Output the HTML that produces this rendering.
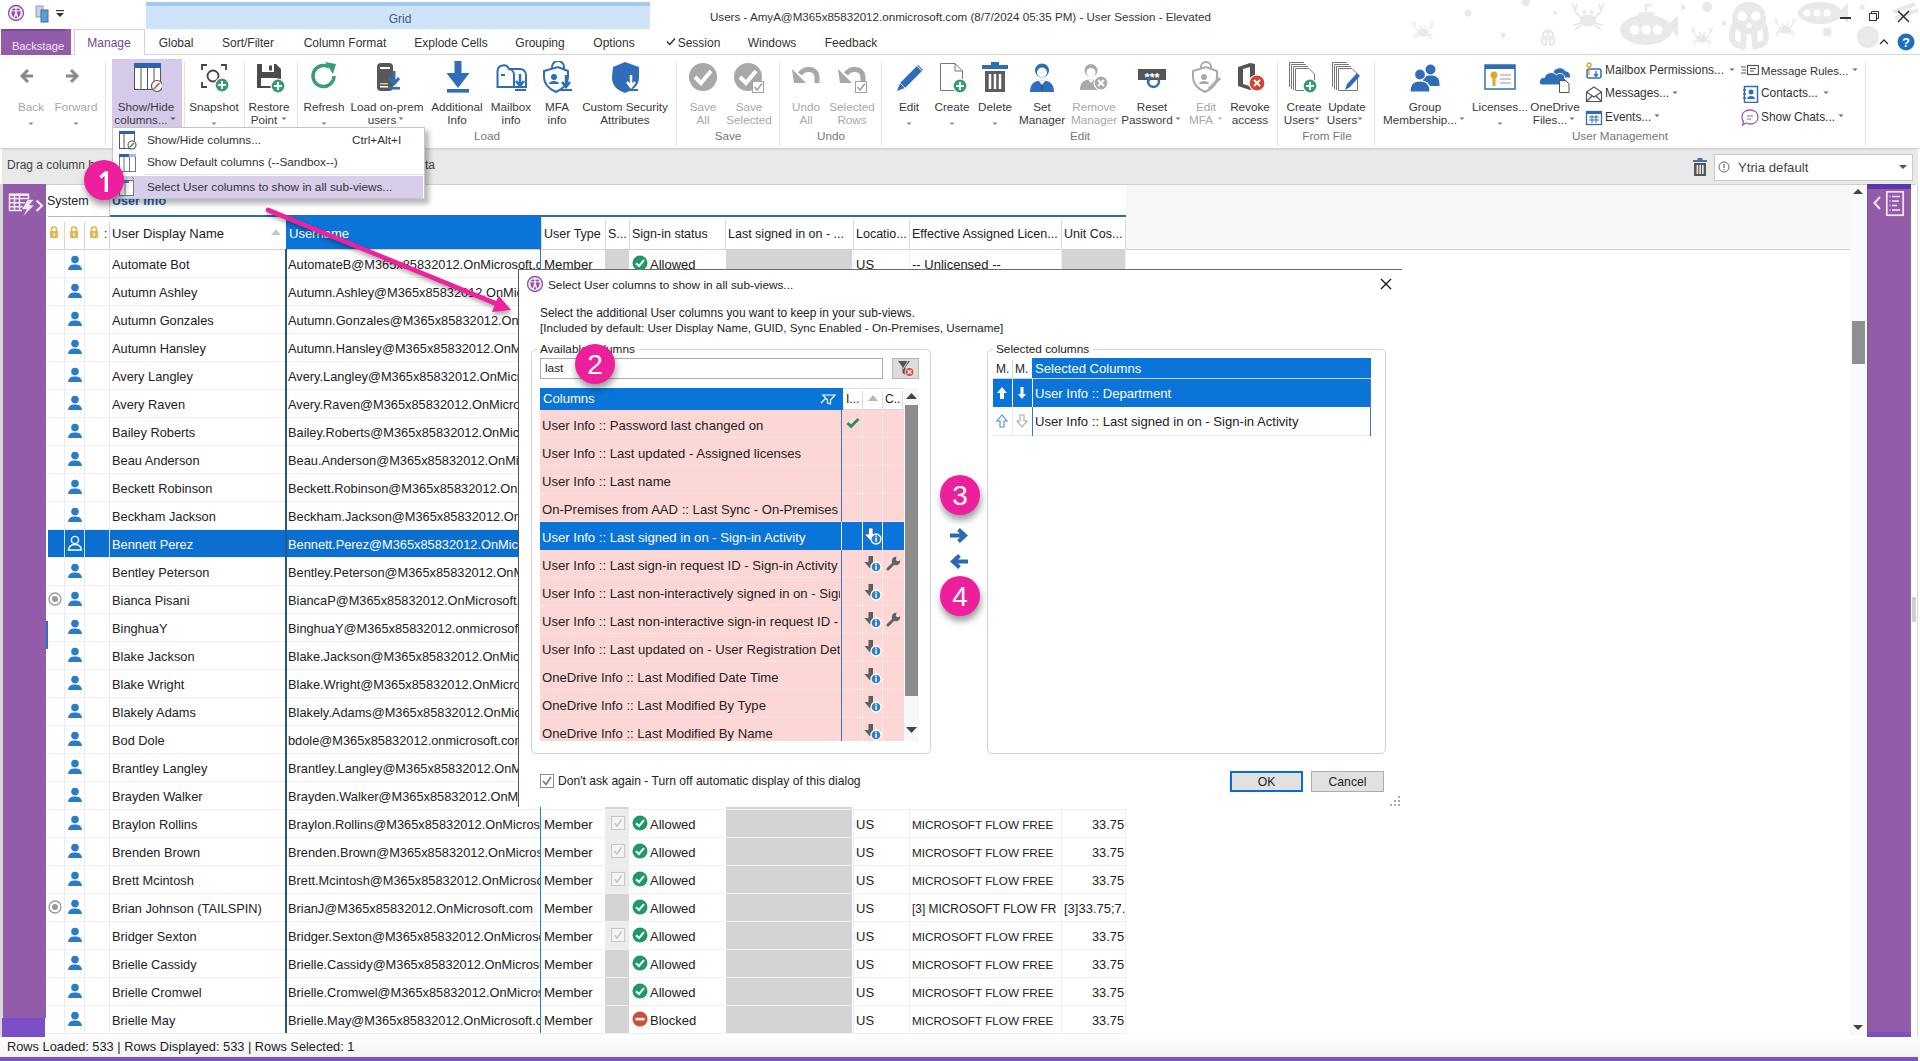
<!DOCTYPE html><html><head><meta charset="utf-8"><style>
html,body{margin:0;padding:0;width:1920px;height:1061px;overflow:hidden;background:#fff;font-family:"Liberation Sans", sans-serif;}
.t{position:absolute;white-space:pre;}
.r{position:absolute;}
.clip{position:absolute;overflow:hidden;}
</style></head><body>

<svg class="r" style="left:7px;top:4px;" width="18" height="18" viewBox="0 0 18 18"><circle cx="9" cy="9" r="7.5" fill="#f5e2f8" stroke="#85589a" stroke-width="1.3"/><ellipse cx="6.8" cy="5.6" rx="1.7" ry="1" fill="#85589a"/><ellipse cx="11.2" cy="5.6" rx="1.7" ry="1" fill="#85589a"/><path d="M4.3 7.6 Q7 7 8.3 7.8 L6.6 13.6 Q4.3 11.2 4.3 7.6Z M13.7 7.6 Q11 7 9.7 7.8 L11.4 13.6 Q13.7 11.2 13.7 7.6Z" fill="#85589a"/><path d="M9 11.3 L10.4 14.2 L7.6 14.2Z" fill="#85589a"/></svg>
<svg class="r" style="left:35px;top:5px;" width="16" height="18" viewBox="0 0 16 18"><rect x="1" y="1" width="7" height="11" fill="#c4d3e6" stroke="#8aa0bb"/><rect x="6" y="5" width="7" height="12" fill="#5b9bd5" stroke="#3d6fa6"/></svg>
<svg class="r" style="left:55px;top:9px;" width="10" height="8" viewBox="0 0 10 8"><rect x="1" y="1" width="8" height="1.2" fill="#333"/><path d="M1 4 L9 4 L5 8Z" fill="#333"/></svg>
<div class="r" style="left:146px;top:2px;width:504px;height:27px;background:#cfe4f8;"></div>
<div class="r" style="left:146px;top:2px;width:504px;height:4px;background:#a3c9ee;"></div>
<div class="t " style="left:400px;top:11.5px;font-size:12px;line-height:15px;color:#3d5a80;width:100px;text-align:center;left:350.0px;">Grid</div>
<div class="t " style="left:710px;top:10.0px;font-size:11.6px;line-height:14px;color:#333;">Users - AmyA@M365x85832012.onmicrosoft.com (8/7/2024 05:35 PM) - User Session - Elevated</div>
<svg class="r" style="left:0;top:0" width="1920" height="55" viewBox="0 0 1920 55"><g transform="translate(1423,31) scale(0.8)" fill="#e9e9e9" stroke="#e9e9e9"><ellipse cx="0" cy="2" rx="7" ry="5" stroke="none"/><path d="M-6 0 L-11 -6 L-13 -12 M-11 -6 L-9 -12 M6 0 L11 -6 L13 -12 M11 -6 L9 -12 M-6 4 L-12 6 M-6 6 L-11 10 M6 4 L12 6 M6 6 L11 10" fill="none" stroke-width="1.6"/><circle cx="-3" cy="-5" r="1.6" stroke="none"/><circle cx="3" cy="-5" r="1.6" stroke="none"/></g><g transform="translate(1588,18) scale(1.2)" fill="#e9e9e9" stroke="#e9e9e9"><ellipse cx="0" cy="2" rx="7" ry="5" stroke="none"/><path d="M-6 0 L-11 -6 L-13 -12 M-11 -6 L-9 -12 M6 0 L11 -6 L13 -12 M11 -6 L9 -12 M-6 4 L-12 6 M-6 6 L-11 10 M6 4 L12 6 M6 6 L11 10" fill="none" stroke-width="1.6"/><circle cx="-3" cy="-5" r="1.6" stroke="none"/><circle cx="3" cy="-5" r="1.6" stroke="none"/></g><g transform="translate(1702,37) scale(0.8)" fill="#e9e9e9" stroke="#e9e9e9"><ellipse cx="0" cy="2" rx="7" ry="5" stroke="none"/><path d="M-6 0 L-11 -6 L-13 -12 M-11 -6 L-9 -12 M6 0 L11 -6 L13 -12 M11 -6 L9 -12 M-6 4 L-12 6 M-6 6 L-11 10 M6 4 L12 6 M6 6 L11 10" fill="none" stroke-width="1.6"/><circle cx="-3" cy="-5" r="1.6" stroke="none"/><circle cx="3" cy="-5" r="1.6" stroke="none"/></g><g transform="translate(1785,28) scale(0.8)" fill="#e9e9e9" stroke="#e9e9e9"><ellipse cx="0" cy="2" rx="7" ry="5" stroke="none"/><path d="M-6 0 L-11 -6 L-13 -12 M-11 -6 L-9 -12 M6 0 L11 -6 L13 -12 M11 -6 L9 -12 M-6 4 L-12 6 M-6 6 L-11 10 M6 4 L12 6 M6 6 L11 10" fill="none" stroke-width="1.6"/><circle cx="-3" cy="-5" r="1.6" stroke="none"/><circle cx="3" cy="-5" r="1.6" stroke="none"/></g><g fill="#e9e9e9"><ellipse cx="1548" cy="35" rx="6" ry="5.699999999999999"/><path d="M1542.6 38.0 Q1540.8 44.0 1544.4 44.6 M1546.2 39.8 L1545.9 45.2 M1549.8 39.8 L1550.1 45.2 M1553.4 38.0 Q1555.2 44.0 1551.6 44.6" fill="none" stroke="#e9e9e9" stroke-width="2.0999999999999996" stroke-linecap="round"/><circle cx="1545.6" cy="34.4" r="1.6800000000000002" fill="#fff"/><circle cx="1550.4" cy="34.4" r="1.6800000000000002" fill="#fff"/><circle cx="1548" cy="37.7" r="0.8999999999999999" fill="#fff"/></g><g fill="#e9e9e9"><ellipse cx="1749" cy="18" rx="17" ry="16.15"/><path d="M1733.7 26.5 Q1728.6 43.5 1738.8 45.2 M1743.9 31.6 L1743.05 46.9 M1754.1 31.6 L1754.95 46.9 M1764.3 26.5 Q1769.4 43.5 1759.2 45.2" fill="none" stroke="#e9e9e9" stroke-width="5.949999999999999" stroke-linecap="round"/><circle cx="1742.2" cy="16.3" r="4.760000000000001" fill="#fff"/><circle cx="1755.8" cy="16.3" r="4.760000000000001" fill="#fff"/><circle cx="1749" cy="25.65" r="2.55" fill="#fff"/></g><g fill="#e9e9e9"><ellipse cx="1646.0" cy="29.8" rx="26.0" ry="15.2"/><rect x="1638.2" y="12.2" width="15.6" height="8.0"/><path d="M1646.0 12.2 V5 H1652.24" fill="none" stroke="#e9e9e9" stroke-width="2.5"/><circle cx="1634.56" cy="29.8" r="4.8" fill="#fff"/><circle cx="1646.0" cy="29.8" r="4.8" fill="#fff"/><circle cx="1657.44" cy="29.8" r="4.8" fill="#fff"/></g><path d="M1668 25 L1678 15 L1678 38Z" fill="#e9e9e9"/><ellipse cx="1820" cy="13" rx="22" ry="11" fill="#e9e9e9"/><path d="M1838 13 L1848 3 L1848 23Z" fill="#e9e9e9"/><circle cx="1807" cy="13" r="3.5" fill="#fff"/><circle cx="1817" cy="13" r="3.5" fill="#fff"/><circle cx="1827" cy="13" r="3.5" fill="#fff"/><circle cx="1468" cy="13" r="3.5" fill="#e9e9e9"/><circle cx="1526" cy="2" r="4" fill="#e9e9e9"/><circle cx="1503" cy="35" r="2.5" fill="#e9e9e9"/><circle cx="1555" cy="13" r="2" fill="#e9e9e9"/><circle cx="1707" cy="7" r="5" fill="#e9e9e9"/><circle cx="1683" cy="7" r="2.5" fill="#e9e9e9"/><circle cx="1724" cy="23" r="2.5" fill="#e9e9e9"/><circle cx="1827" cy="32" r="4.5" fill="#e9e9e9"/><circle cx="1868" cy="37" r="11" fill="#e9e9e9"/><circle cx="1862" cy="7" r="2.5" fill="#e9e9e9"/><path d="M1893 12 L1915 4 M1895 18 L1918 10" stroke="#e9e9e9" stroke-width="4"/></svg>
<div class="r" style="left:1840px;top:17px;width:11px;height:1.5px;background:#333;"></div>
<svg class="r" style="left:1868px;top:10px;" width="12" height="12" viewBox="0 0 12 12"><rect x="1.5" y="3.5" width="7" height="7" fill="none" stroke="#333"/><path d="M3.5 3.5 V1.5 H10.5 V8.5 H8.5" fill="none" stroke="#333"/></svg>
<svg class="r" style="left:1897px;top:10px;" width="13" height="13" viewBox="0 0 13 13"><path d="M1 1 L12 12 M12 1 L1 12" stroke="#222" stroke-width="1.4"/></svg>
<svg class="r" style="left:1879px;top:38px;" width="10" height="7" viewBox="0 0 10 7"><path d="M1 6 L5 2 L9 6" fill="none" stroke="#333" stroke-width="1.3"/></svg>
<svg class="r" style="left:1897px;top:33px;" width="18" height="18" viewBox="0 0 18 18"><circle cx="9" cy="9" r="8.5" fill="#1f6fc0"/><text x="9" y="14" font-family="Liberation Sans" font-weight="bold" font-size="13" fill="#fff" text-anchor="middle">?</text></svg>
<div class="r" style="left:0px;top:54px;width:1920px;height:1px;background:#d5d5d5;"></div>
<div class="r" style="left:1px;top:29px;width:70px;height:26px;background:#935ca9;"></div>
<div class="r" style="left:1px;top:29px;width:64px;height:2px;background:#7d45a0;"></div>
<div class="t " style="left:38px;top:39.0px;font-size:11.2px;line-height:14px;color:#f6e2fb;width:70px;text-align:center;left:3.0px;">Backstage</div>
<div class="r" style="left:74px;top:29px;width:71px;height:26px;background:#fff;border:1px solid #d0d0d0;border-bottom:none;box-sizing:border-box;"></div>
<div class="t " style="left:109px;top:35.5px;font-size:12px;line-height:15px;color:#6a4a94;width:69px;text-align:center;left:74.5px;">Manage</div>
<div class="t " style="left:176px;top:35.5px;font-size:12px;line-height:15px;color:#333;width:140px;text-align:center;left:106.0px;">Global</div>
<div class="t " style="left:248px;top:35.5px;font-size:12px;line-height:15px;color:#333;width:140px;text-align:center;left:178.0px;">Sort/Filter</div>
<div class="t " style="left:345px;top:35.5px;font-size:12px;line-height:15px;color:#333;width:140px;text-align:center;left:275.0px;">Column Format</div>
<div class="t " style="left:451px;top:35.5px;font-size:12px;line-height:15px;color:#333;width:140px;text-align:center;left:381.0px;">Explode Cells</div>
<div class="t " style="left:540px;top:35.5px;font-size:12px;line-height:15px;color:#333;width:140px;text-align:center;left:470.0px;">Grouping</div>
<div class="t " style="left:614px;top:35.5px;font-size:12px;line-height:15px;color:#333;width:140px;text-align:center;left:544.0px;">Options</div>
<div class="t " style="left:699px;top:35.5px;font-size:12px;line-height:15px;color:#333;width:140px;text-align:center;left:629.0px;">Session</div>
<div class="t " style="left:772px;top:35.5px;font-size:12px;line-height:15px;color:#333;width:140px;text-align:center;left:702.0px;">Windows</div>
<div class="t " style="left:851px;top:35.5px;font-size:12px;line-height:15px;color:#333;width:140px;text-align:center;left:781.0px;">Feedback</div>
<svg class="r" style="left:666px;top:37px;" width="10" height="9" viewBox="0 0 10 9"><path d="M1 4.5 L3.8 7.5 L9 1.5" fill="none" stroke="#333" stroke-width="1.5"/></svg>
<div class="r" style="left:0px;top:148px;width:1920px;height:1px;background:#d6d6d6;"></div>
<div class="r" style="left:112px;top:59px;width:70px;height:68px;background:#d6caeb;"></div>
<div class="r" style="left:105px;top:62px;width:1px;height:84px;background:#e3e3e3;"></div>
<div class="r" style="left:184px;top:62px;width:1px;height:84px;background:#e3e3e3;"></div>
<div class="r" style="left:244px;top:62px;width:1px;height:84px;background:#e3e3e3;"></div>
<div class="r" style="left:297px;top:62px;width:1px;height:84px;background:#e3e3e3;"></div>
<div class="r" style="left:676px;top:62px;width:1px;height:84px;background:#e3e3e3;"></div>
<div class="r" style="left:779px;top:62px;width:1px;height:84px;background:#e3e3e3;"></div>
<div class="r" style="left:881px;top:62px;width:1px;height:84px;background:#e3e3e3;"></div>
<div class="r" style="left:1277px;top:62px;width:1px;height:84px;background:#e3e3e3;"></div>
<div class="r" style="left:1374px;top:62px;width:1px;height:84px;background:#e3e3e3;"></div>
<div class="r" style="left:1865px;top:62px;width:1px;height:84px;background:#e3e3e3;"></div>
<svg class="r" style="left:15px;top:61px;" width="32" height="32" viewBox="0 0 32 32"><path d="M18 15 H8 M13 9 L7 15 L13 21" fill="none" stroke="#8a8a8a" stroke-width="3"/></svg>
<div class="t " style="left:31px;top:99.0px;font-size:11.7px;line-height:15px;color:#a8a8a8;width:160px;text-align:center;left:-49.0px;">Back</div>
<svg class="r" style="left:28px;top:122px;" width="6" height="4" viewBox="0 0 6 4"><path d="M0.5 0.5 L5.5 0.5 L3 3Z" fill="#888"/></svg>
<svg class="r" style="left:60px;top:61px;" width="32" height="32" viewBox="0 0 32 32"><path d="M6 15 H16 M11 9 L17 15 L11 21" fill="none" stroke="#8a8a8a" stroke-width="3"/></svg>
<div class="t " style="left:76px;top:99.0px;font-size:11.7px;line-height:15px;color:#a8a8a8;width:160px;text-align:center;left:-4.0px;">Forward</div>
<svg class="r" style="left:73px;top:122px;" width="6" height="4" viewBox="0 0 6 4"><path d="M0.5 0.5 L5.5 0.5 L3 3Z" fill="#888"/></svg>
<svg class="r" style="left:130px;top:61px;" width="32" height="32" viewBox="0 0 32 32"><rect x="4.5" y="2.5" width="26" height="26" fill="#fff" stroke="#555"/><rect x="4" y="2" width="27" height="5" fill="#2d63a8"/><path d="M11 7 V28 M17.5 7 V28 M24 7 V28" stroke="#555"/><circle cx="27" cy="25" r="5.5" fill="#fff" stroke="#555" stroke-width="1.2"/><path d="M24 28 L29.5 22" stroke="#d9452f" stroke-width="1.5"/></svg>
<div class="t " style="left:146px;top:99.0px;font-size:11.7px;line-height:15px;color:#3a3a3a;width:160px;text-align:center;left:66.0px;">Show/Hide</div>
<div class="t " style="left:141px;top:112.3px;font-size:11.7px;line-height:15px;color:#3a3a3a;width:160px;text-align:center;left:61.0px;">columns...</div>
<svg class="r" style="left:198px;top:61px;" width="32" height="32" viewBox="0 0 32 32"><path d="M4 9 V4 H9 M23 4 H28 V9 M4 21 V26 H9" fill="none" stroke="#444" stroke-width="1.8"/><circle cx="15" cy="15" r="5.5" fill="none" stroke="#444" stroke-width="1.8"/><circle cx="24" cy="24" r="7" fill="#3a9a72" stroke="#fff" stroke-width="1.2"/><path d="M20 24 H28 M24 20 V28" stroke="#fff" stroke-width="2"/></svg>
<div class="t " style="left:214px;top:99.0px;font-size:11.7px;line-height:15px;color:#3a3a3a;width:160px;text-align:center;left:134.0px;">Snapshot</div>
<svg class="r" style="left:211px;top:122px;" width="6" height="4" viewBox="0 0 6 4"><path d="M0.5 0.5 L5.5 0.5 L3 3Z" fill="#888"/></svg>
<svg class="r" style="left:253px;top:61px;" width="32" height="32" viewBox="0 0 32 32"><path d="M4 3 H23 L28 8 V27 H4Z" fill="#4b4b4b"/><rect x="9" y="3" width="12" height="8" fill="#fff"/><rect x="16" y="4.5" width="3" height="5" fill="#4b4b4b"/><rect x="8" y="17" width="16" height="8" fill="#fff"/><circle cx="25" cy="25" r="7" fill="#3a9a72" stroke="#fff" stroke-width="1.2"/><path d="M21 25 H29 M25 21 V29" stroke="#fff" stroke-width="2"/></svg>
<div class="t " style="left:269px;top:99.0px;font-size:11.7px;line-height:15px;color:#3a3a3a;width:160px;text-align:center;left:189.0px;">Restore</div>
<div class="t " style="left:264px;top:112.3px;font-size:11.7px;line-height:15px;color:#3a3a3a;width:160px;text-align:center;left:184.0px;">Point</div>
<svg class="r" style="left:308px;top:61px;" width="32" height="32" viewBox="0 0 32 32"><path d="M26 15 A10.5 10.5 0 1 1 21 6" fill="none" stroke="#3c9a74" stroke-width="3.5"/><path d="M17 1 L28 3 L25 13Z" fill="#3c9a74"/></svg>
<div class="t " style="left:324px;top:99.0px;font-size:11.7px;line-height:15px;color:#3a3a3a;width:160px;text-align:center;left:244.0px;">Refresh</div>
<svg class="r" style="left:321px;top:122px;" width="6" height="4" viewBox="0 0 6 4"><path d="M0.5 0.5 L5.5 0.5 L3 3Z" fill="#888"/></svg>
<svg class="r" style="left:371px;top:61px;" width="32" height="32" viewBox="0 0 32 32"><rect x="6" y="2" width="16" height="28" rx="4" fill="#585858"/><rect x="9" y="6" width="10" height="2" fill="#fff"/><rect x="9" y="22" width="8" height="1.5" fill="#e6c27a"/><rect x="9" y="25" width="8" height="1.5" fill="#fff"/><path d="M23 10 V21 M18 17 L23 23 L28 17" fill="none" stroke="#2f6db8" stroke-width="3"/><rect x="17" y="26" width="12" height="2.5" fill="#2f6db8"/></svg>
<div class="t " style="left:387px;top:99.0px;font-size:11.7px;line-height:15px;color:#3a3a3a;width:160px;text-align:center;left:307.0px;">Load on-prem</div>
<div class="t " style="left:382px;top:112.3px;font-size:11.7px;line-height:15px;color:#3a3a3a;width:160px;text-align:center;left:302.0px;">users</div>
<svg class="r" style="left:441px;top:61px;" width="32" height="32" viewBox="0 0 32 32"><path d="M13.5 0 H20.5 V12 H28.5 L17 27 L5.5 12 H13.5Z" fill="#2f6db8"/><rect x="6" y="28" width="22" height="3.6" fill="#2f6db8"/></svg>
<div class="t " style="left:457px;top:99.0px;font-size:11.7px;line-height:15px;color:#3a3a3a;width:160px;text-align:center;left:377.0px;">Additional</div>
<div class="t " style="left:457px;top:112.3px;font-size:11.7px;line-height:15px;color:#3a3a3a;width:160px;text-align:center;left:377.0px;">Info</div>
<svg class="r" style="left:495px;top:61px;" width="32" height="32" viewBox="0 0 32 32"><path d="M2.5 26 V10 A6 6 0 0 1 14 8 H25 A6 6 0 0 1 31 14 V26Z" fill="#fff" stroke="#2f6db8" stroke-width="2"/><path d="M14 8 A6 6 0 0 1 19 14 V26" fill="none" stroke="#2f6db8" stroke-width="2"/><rect x="6" y="13" width="4" height="2" fill="#2f6db8"/><path d="M25 13 V24 M21 20 L25 25 L29 20" fill="none" stroke="#2f6db8" stroke-width="2.5"/><rect x="20" y="28" width="11" height="2" fill="#2f6db8"/></svg>
<div class="t " style="left:511px;top:99.0px;font-size:11.7px;line-height:15px;color:#3a3a3a;width:160px;text-align:center;left:431.0px;">Mailbox</div>
<div class="t " style="left:511px;top:112.3px;font-size:11.7px;line-height:15px;color:#3a3a3a;width:160px;text-align:center;left:431.0px;">info</div>
<svg class="r" style="left:541px;top:61px;" width="32" height="32" viewBox="0 0 32 32"><path d="M11 8 V6 A6 6 0 0 1 23 6 V8" fill="none" stroke="#2f6db8" stroke-width="2"/><path d="M3 10 L17 6 L27 10 V16 C27 24 22 28 15 31 C8 28 3 24 3 16Z" fill="#fff" stroke="#2f6db8" stroke-width="2"/><circle cx="13" cy="16" r="3" fill="#2f6db8"/><path d="M8 23 C8 19 18 19 18 23Z" fill="#2f6db8"/><path d="M25 14 V25 M21 21 L25 26 L29 21" fill="none" stroke="#2f6db8" stroke-width="2.5"/><rect x="19" y="28" width="12" height="2" fill="#2f6db8"/></svg>
<div class="t " style="left:557px;top:99.0px;font-size:11.7px;line-height:15px;color:#3a3a3a;width:160px;text-align:center;left:477.0px;">MFA</div>
<div class="t " style="left:557px;top:112.3px;font-size:11.7px;line-height:15px;color:#3a3a3a;width:160px;text-align:center;left:477.0px;">info</div>
<svg class="r" style="left:609px;top:61px;" width="32" height="32" viewBox="0 0 32 32"><path d="M4 6 L16 1 L30 6 V16 C30 25 24 29 16 32 C8 29 3 25 3 16Z" fill="#2f6db8"/><path d="M16 1 L16 32" stroke="#fff" stroke-width="0"/><path d="M18 6 H28 V16 C28 24 24 27 18 30Z" fill="#fff" opacity="0.0"/><path d="M22 14 V25 M18 21 L22 26 L26 21" fill="none" stroke="#fff" stroke-width="2.5"/><rect x="16" y="28" width="13" height="2" fill="#2f6db8"/></svg>
<div class="t " style="left:625px;top:99.0px;font-size:11.7px;line-height:15px;color:#3a3a3a;width:160px;text-align:center;left:545.0px;">Custom Security</div>
<div class="t " style="left:625px;top:112.3px;font-size:11.7px;line-height:15px;color:#3a3a3a;width:160px;text-align:center;left:545.0px;">Attributes</div>
<svg class="r" style="left:687px;top:61px;" width="32" height="32" viewBox="0 0 32 32"><circle cx="16" cy="16" r="14" fill="#a8a8a8"/><path d="M8 16 L14 22 L24 10" fill="none" stroke="#fff" stroke-width="4"/></svg>
<div class="t " style="left:703px;top:99.0px;font-size:11.7px;line-height:15px;color:#a8a8a8;width:160px;text-align:center;left:623.0px;">Save</div>
<div class="t " style="left:703px;top:112.3px;font-size:11.7px;line-height:15px;color:#a8a8a8;width:160px;text-align:center;left:623.0px;">All</div>
<svg class="r" style="left:733px;top:61px;" width="32" height="32" viewBox="0 0 32 32"><circle cx="15" cy="16" r="14" fill="#a8a8a8"/><path d="M7 16 L13 22 L23 10" fill="none" stroke="#fff" stroke-width="4"/><rect x="19.5" y="20.5" width="11" height="11" fill="#fff" stroke="#a0a0a0"/><path d="M21.5 26 L24 29 L29 22.5" fill="none" stroke="#a0a0a0" stroke-width="1.5"/></svg>
<div class="t " style="left:749px;top:99.0px;font-size:11.7px;line-height:15px;color:#a8a8a8;width:160px;text-align:center;left:669.0px;">Save</div>
<div class="t " style="left:749px;top:112.3px;font-size:11.7px;line-height:15px;color:#a8a8a8;width:160px;text-align:center;left:669.0px;">Selected</div>
<svg class="r" style="left:790px;top:61px;" width="32" height="32" viewBox="0 0 32 32"><path d="M10 13 C14 7 26 6 27 16 V22" fill="none" stroke="#a8a8a8" stroke-width="5"/><path d="M2 8 L4 22 L16 22Z" fill="#a8a8a8"/></svg>
<div class="t " style="left:806px;top:99.0px;font-size:11.7px;line-height:15px;color:#a8a8a8;width:160px;text-align:center;left:726.0px;">Undo</div>
<div class="t " style="left:806px;top:112.3px;font-size:11.7px;line-height:15px;color:#a8a8a8;width:160px;text-align:center;left:726.0px;">All</div>
<svg class="r" style="left:836px;top:61px;" width="32" height="32" viewBox="0 0 32 32"><path d="M10 13 C14 7 26 6 27 16 V20" fill="none" stroke="#a8a8a8" stroke-width="5"/><path d="M2 8 L4 22 L16 22Z" fill="#a8a8a8"/><rect x="19.5" y="20.5" width="11" height="11" fill="#fff" stroke="#a0a0a0"/><path d="M21.5 26 L24 29 L29 22.5" fill="none" stroke="#a0a0a0" stroke-width="1.5"/></svg>
<div class="t " style="left:852px;top:99.0px;font-size:11.7px;line-height:15px;color:#a8a8a8;width:160px;text-align:center;left:772.0px;">Selected</div>
<div class="t " style="left:852px;top:112.3px;font-size:11.7px;line-height:15px;color:#a8a8a8;width:160px;text-align:center;left:772.0px;">Rows</div>
<svg class="r" style="left:893px;top:61px;" width="32" height="32" viewBox="0 0 32 32"><path d="M4 30 L7 22 L25 4 L30 9 L12 27Z" fill="#2f6db8"/><path d="M7 22 L12 27" stroke="#fff" stroke-width="1"/><path d="M24 5 L29 10" stroke="#fff" stroke-width="1"/></svg>
<div class="t " style="left:909px;top:99.0px;font-size:11.7px;line-height:15px;color:#3a3a3a;width:160px;text-align:center;left:829.0px;">Edit</div>
<svg class="r" style="left:906px;top:122px;" width="6" height="4" viewBox="0 0 6 4"><path d="M0.5 0.5 L5.5 0.5 L3 3Z" fill="#888"/></svg>
<svg class="r" style="left:936px;top:61px;" width="32" height="32" viewBox="0 0 32 32"><path d="M4.5 2.5 H19 L26.5 10 V29.5 H4.5Z" fill="#fff" stroke="#777"/><path d="M19 2.5 V10 H26.5" fill="none" stroke="#777"/><circle cx="24" cy="25" r="7" fill="#3a9a72" stroke="#fff" stroke-width="1.2"/><path d="M20 25 H28 M24 21 V29" stroke="#fff" stroke-width="2"/></svg>
<div class="t " style="left:952px;top:99.0px;font-size:11.7px;line-height:15px;color:#3a3a3a;width:160px;text-align:center;left:872.0px;">Create</div>
<svg class="r" style="left:949px;top:122px;" width="6" height="4" viewBox="0 0 6 4"><path d="M0.5 0.5 L5.5 0.5 L3 3Z" fill="#888"/></svg>
<svg class="r" style="left:979px;top:61px;" width="32" height="32" viewBox="0 0 32 32"><rect x="3" y="4" width="26" height="4" fill="#2f6db8"/><rect x="12" y="1" width="8" height="3" fill="#2f6db8"/><rect x="6" y="10" width="20" height="21" fill="#5d5d5d"/><path d="M11 13 V28 M16 13 V28 M21 13 V28" stroke="#fff" stroke-width="2.5"/></svg>
<div class="t " style="left:995px;top:99.0px;font-size:11.7px;line-height:15px;color:#3a3a3a;width:160px;text-align:center;left:915.0px;">Delete</div>
<svg class="r" style="left:992px;top:122px;" width="6" height="4" viewBox="0 0 6 4"><path d="M0.5 0.5 L5.5 0.5 L3 3Z" fill="#888"/></svg>
<svg class="r" style="left:1026px;top:61px;" width="32" height="32" viewBox="0 0 32 32"><circle cx="16" cy="9.5" r="7" fill="#2f6db8"/><ellipse cx="16" cy="11.5" rx="5" ry="5" fill="#fff"/><path d="M11 8 Q16 4 21 8 L21 6 Q16 1 11 6Z" fill="#2f6db8"/><path d="M4 31 C4 22 9 19.5 16 19.5 C23 19.5 28 22 28 31Z" fill="#2f6db8"/><path d="M12.5 19.5 L16 24 L19.5 19.5Z" fill="#fff"/><path d="M16 23 L15 26 L16 30 L17 26Z" fill="#1d4f8f"/></svg>
<div class="t " style="left:1042px;top:99.0px;font-size:11.7px;line-height:15px;color:#3a3a3a;width:160px;text-align:center;left:962.0px;">Set</div>
<div class="t " style="left:1042px;top:112.3px;font-size:11.7px;line-height:15px;color:#3a3a3a;width:160px;text-align:center;left:962.0px;">Manager</div>
<svg class="r" style="left:1078px;top:61px;" width="32" height="32" viewBox="0 0 32 32"><circle cx="13" cy="9.5" r="6.5" fill="#aaa"/><ellipse cx="13" cy="11.5" rx="4.5" ry="4.5" fill="#fff"/><path d="M2 29 C2 21 6 18.5 13 18.5 C20 18.5 24 21 24 29Z" fill="#aaa"/><path d="M10 18.5 L13 22 L16 18.5Z" fill="#fff"/><circle cx="23" cy="22" r="7" fill="#aaa" stroke="#fff" stroke-width="1.2"/><path d="M20 19 L26 25 M26 19 L20 25" stroke="#fff" stroke-width="1.8"/></svg>
<div class="t " style="left:1094px;top:99.0px;font-size:11.7px;line-height:15px;color:#a8a8a8;width:160px;text-align:center;left:1014.0px;">Remove</div>
<div class="t " style="left:1094px;top:112.3px;font-size:11.7px;line-height:15px;color:#a8a8a8;width:160px;text-align:center;left:1014.0px;">Manager</div>
<svg class="r" style="left:1136px;top:61px;" width="32" height="32" viewBox="0 0 32 32"><rect x="2" y="8" width="28" height="11" fill="#555"/><text x="16" y="21" font-size="13" font-family="Liberation Sans" fill="#fff" text-anchor="middle" font-weight="bold">***</text><path d="M22.3 17.8 A5.5 5.5 0 1 1 12.7 17.8" fill="none" stroke="#2f6db8" stroke-width="2.3"/><path d="M9.5 16 L16 15.5 L13 21Z" fill="#2f6db8"/></svg>
<div class="t " style="left:1152px;top:99.0px;font-size:11.7px;line-height:15px;color:#3a3a3a;width:160px;text-align:center;left:1072.0px;">Reset</div>
<div class="t " style="left:1147px;top:112.3px;font-size:11.7px;line-height:15px;color:#3a3a3a;width:160px;text-align:center;left:1067.0px;">Password</div>
<svg class="r" style="left:1190px;top:61px;" width="32" height="32" viewBox="0 0 32 32"><path d="M11 8 V6 A5 5 0 0 1 21 6 V8" fill="none" stroke="#aaa" stroke-width="2"/><path d="M3 10 L16 6 L27 10 V16 C27 24 22 28 15 31 C8 28 3 24 3 16Z" fill="#fff" stroke="#aaa" stroke-width="2"/><circle cx="14" cy="16" r="3" fill="#aaa"/><path d="M9 23 C9 19 19 19 19 23Z" fill="#aaa"/><path d="M19 28 L30 17" stroke="#aaa" stroke-width="3"/></svg>
<div class="t " style="left:1206px;top:99.0px;font-size:11.7px;line-height:15px;color:#a8a8a8;width:160px;text-align:center;left:1126.0px;">Edit</div>
<div class="t " style="left:1201px;top:112.3px;font-size:11.7px;line-height:15px;color:#a8a8a8;width:160px;text-align:center;left:1121.0px;">MFA</div>
<svg class="r" style="left:1234px;top:61px;" width="32" height="32" viewBox="0 0 32 32"><path d="M4 6 L16 2 L21 3 V27 L16 29 L4 25Z" fill="#555"/><path d="M9 8 L16 6 V25 L9 23Z" fill="#fff"/><circle cx="23" cy="22" r="8" fill="#d0453a" stroke="#fff" stroke-width="1.2"/><path d="M20 19 L26 25 M26 19 L20 25" stroke="#fff" stroke-width="1.8"/></svg>
<div class="t " style="left:1250px;top:99.0px;font-size:11.7px;line-height:15px;color:#3a3a3a;width:160px;text-align:center;left:1170.0px;">Revoke</div>
<div class="t " style="left:1250px;top:112.3px;font-size:11.7px;line-height:15px;color:#3a3a3a;width:160px;text-align:center;left:1170.0px;">access</div>
<svg class="r" style="left:1288px;top:61px;" width="32" height="32" viewBox="0 0 32 32"><path d="M1.5 26 V1.5 H16 M3.5 28 V3.5 H18 M5.5 29 V5.5 H20" fill="none" stroke="#777"/><path d="M7.5 7.5 H21 L26.5 13 V29.5 H7.5Z" fill="#fff" stroke="#777"/><circle cx="22" cy="25" r="7" fill="#3a9a72" stroke="#fff" stroke-width="1.2"/><path d="M18 25 H26 M22 21 V29" stroke="#fff" stroke-width="2"/></svg>
<div class="t " style="left:1304px;top:99.0px;font-size:11.7px;line-height:15px;color:#3a3a3a;width:160px;text-align:center;left:1224.0px;">Create</div>
<div class="t " style="left:1299px;top:112.3px;font-size:11.7px;line-height:15px;color:#3a3a3a;width:160px;text-align:center;left:1219.0px;">Users</div>
<svg class="r" style="left:1331px;top:61px;" width="32" height="32" viewBox="0 0 32 32"><path d="M1.5 26 V1.5 H16 M3.5 28 V3.5 H18 M5.5 29 V5.5 H20" fill="none" stroke="#777"/><path d="M7.5 7.5 H21 L26.5 13 V29.5 H7.5Z" fill="#fff" stroke="#777"/><path d="M14 29 L16 23 L26 12 L29 15 L19 26Z" fill="#2f6db8"/></svg>
<div class="t " style="left:1347px;top:99.0px;font-size:11.7px;line-height:15px;color:#3a3a3a;width:160px;text-align:center;left:1267.0px;">Update</div>
<div class="t " style="left:1342px;top:112.3px;font-size:11.7px;line-height:15px;color:#3a3a3a;width:160px;text-align:center;left:1262.0px;">Users</div>
<svg class="r" style="left:1409px;top:61px;" width="32" height="32" viewBox="0 0 32 32"><g transform="translate(0,2)"><circle cx="21.5" cy="6.5" r="5" fill="#2f6db8"/><path d="M13.5 21 C13.5 14 17 12.5 21.5 12.5 C26.5 12.5 30.5 14 30.5 21 V23 H13.5Z" fill="#2f6db8"/><circle cx="11" cy="11.5" r="5.5" fill="#2f6db8" stroke="#fff" stroke-width="1.2"/><path d="M1 28 C1 20.5 4.5 18 11 18 C17.5 18 21 20.5 21 28 V29 H1Z" fill="#2f6db8" stroke="#fff" stroke-width="1.2"/></g></svg>
<div class="t " style="left:1425px;top:99.0px;font-size:11.7px;line-height:15px;color:#3a3a3a;width:160px;text-align:center;left:1345.0px;">Group</div>
<div class="t " style="left:1420px;top:112.3px;font-size:11.7px;line-height:15px;color:#3a3a3a;width:160px;text-align:center;left:1340.0px;">Membership...</div>
<svg class="r" style="left:1484px;top:61px;" width="32" height="32" viewBox="0 0 32 32"><rect x="1" y="4" width="30" height="24" fill="#fff" stroke="#2f6db8" stroke-width="1.5"/><rect x="1" y="4" width="30" height="4" fill="#2f6db8"/><circle cx="10" cy="14" r="3.5" fill="#e0a530"/><rect x="8.5" y="16" width="3" height="9" fill="#e0a530"/><path d="M16 14 H27 M16 18 H27 M16 22 H27" stroke="#999" stroke-width="1.2"/></svg>
<div class="t " style="left:1500px;top:99.0px;font-size:11.7px;line-height:15px;color:#3a3a3a;width:160px;text-align:center;left:1420.0px;">Licenses...</div>
<svg class="r" style="left:1497px;top:122px;" width="6" height="4" viewBox="0 0 6 4"><path d="M0.5 0.5 L5.5 0.5 L3 3Z" fill="#888"/></svg>
<svg class="r" style="left:1539px;top:61px;" width="32" height="32" viewBox="0 0 32 32"><path d="M14 12 C15 6 24 5 26.5 10 C30 10 32 13 31.5 17 H18Z" fill="#2f6db8" stroke="#fff" stroke-width="1"/><path d="M3 24 C-1 24 -0.5 16 5.5 16.5 C7 11 14.5 10 17.5 14 C19.5 11 26 12 26 18 C29 18.5 29 24 26 24Z" fill="#2f6db8" stroke="#fff" stroke-width="1"/><path d="M20.5 19.5 H26.5 L30 23 V31.5 H20.5Z" fill="#fff" stroke="#555"/></svg>
<div class="t " style="left:1555px;top:99.0px;font-size:11.7px;line-height:15px;color:#3a3a3a;width:160px;text-align:center;left:1475.0px;">OneDrive</div>
<div class="t " style="left:1550px;top:112.3px;font-size:11.7px;line-height:15px;color:#3a3a3a;width:160px;text-align:center;left:1470.0px;">Files...</div>
<svg class="r" style="left:170px;top:117px;" width="6" height="4" viewBox="0 0 6 4"><path d="M0.5 0.5 L5.5 0.5 L3 3Z" fill="#555"/></svg>
<svg class="r" style="left:281px;top:117px;" width="6" height="4" viewBox="0 0 6 4"><path d="M0.5 0.5 L5.5 0.5 L3 3Z" fill="#777"/></svg>
<svg class="r" style="left:398px;top:117px;" width="6" height="4" viewBox="0 0 6 4"><path d="M0.5 0.5 L5.5 0.5 L3 3Z" fill="#777"/></svg>
<svg class="r" style="left:1175px;top:117px;" width="6" height="4" viewBox="0 0 6 4"><path d="M0.5 0.5 L5.5 0.5 L3 3Z" fill="#777"/></svg>
<svg class="r" style="left:1217px;top:117px;" width="6" height="4" viewBox="0 0 6 4"><path d="M0.5 0.5 L5.5 0.5 L3 3Z" fill="#bbb"/></svg>
<svg class="r" style="left:1314px;top:117px;" width="6" height="4" viewBox="0 0 6 4"><path d="M0.5 0.5 L5.5 0.5 L3 3Z" fill="#777"/></svg>
<svg class="r" style="left:1357px;top:117px;" width="6" height="4" viewBox="0 0 6 4"><path d="M0.5 0.5 L5.5 0.5 L3 3Z" fill="#777"/></svg>
<svg class="r" style="left:1459px;top:117px;" width="6" height="4" viewBox="0 0 6 4"><path d="M0.5 0.5 L5.5 0.5 L3 3Z" fill="#777"/></svg>
<svg class="r" style="left:1569px;top:117px;" width="6" height="4" viewBox="0 0 6 4"><path d="M0.5 0.5 L5.5 0.5 L3 3Z" fill="#777"/></svg>
<div class="t " style="left:487px;top:127.6px;font-size:11.7px;line-height:15px;color:#777;width:160px;text-align:center;left:407.0px;">Load</div>
<div class="t " style="left:728px;top:127.6px;font-size:11.7px;line-height:15px;color:#777;width:160px;text-align:center;left:648.0px;">Save</div>
<div class="t " style="left:831px;top:127.6px;font-size:11.7px;line-height:15px;color:#777;width:160px;text-align:center;left:751.0px;">Undo</div>
<div class="t " style="left:1080px;top:127.6px;font-size:11.7px;line-height:15px;color:#777;width:160px;text-align:center;left:1000.0px;">Edit</div>
<div class="t " style="left:1327px;top:127.6px;font-size:11.7px;line-height:15px;color:#777;width:160px;text-align:center;left:1247.0px;">From File</div>
<div class="t " style="left:1620px;top:127.6px;font-size:11.7px;line-height:15px;color:#777;width:160px;text-align:center;left:1540.0px;">User Management</div>
<svg class="r" style="left:1585px;top:61.5px;" width="18" height="18" viewBox="0 0 18 18"><rect x="2" y="7" width="14" height="9" rx="2" fill="#fff" stroke="#2f6db8" stroke-width="1.5"/><circle cx="4" cy="3" r="2" fill="none" stroke="#d8a030" stroke-width="1.3"/><rect x="3.3" y="5" width="1.4" height="8" fill="#d8a030"/><path d="M11 9 V14 M9 12 L11 14.5 L13 12" fill="none" stroke="#2f6db8" stroke-width="1.3"/></svg>
<div class="t " style="left:1605px;top:63.0px;font-size:11.9px;line-height:15px;color:#333;">Mailbox Permissions...</div>
<svg class="r" style="left:1729px;top:67.5px;" width="6" height="4" viewBox="0 0 6 4"><path d="M0.5 0.5 L5.5 0.5 L3 3Z" fill="#666"/></svg>
<svg class="r" style="left:1585px;top:84.9px;" width="18" height="18" viewBox="0 0 18 18"><path d="M1.5 7 L9 2 L16.5 7 V16.5 H1.5Z" fill="#fff" stroke="#555" stroke-width="1.2"/><path d="M1.5 7 L9 12 L16.5 7 M1.5 16.5 L7 11 M16.5 16.5 L11 11" fill="none" stroke="#555" stroke-width="1.2"/></svg>
<div class="t " style="left:1605px;top:86.4px;font-size:11.9px;line-height:15px;color:#333;">Messages...</div>
<svg class="r" style="left:1672px;top:90.9px;" width="6" height="4" viewBox="0 0 6 4"><path d="M0.5 0.5 L5.5 0.5 L3 3Z" fill="#666"/></svg>
<svg class="r" style="left:1585px;top:108px;" width="18" height="18" viewBox="0 0 18 18"><rect x="1.5" y="3.5" width="15" height="13" fill="#fff" stroke="#2f6db8" stroke-width="1.3"/><rect x="1.5" y="3" width="15" height="3" fill="#2f6db8"/><path d="M4 9 H14 M4 12 H14 M7 7 V15 M11 7 V15" stroke="#2f6db8" stroke-width="1"/></svg>
<div class="t " style="left:1605px;top:109.5px;font-size:11.9px;line-height:15px;color:#333;">Events...</div>
<svg class="r" style="left:1654px;top:114px;" width="6" height="4" viewBox="0 0 6 4"><path d="M0.5 0.5 L5.5 0.5 L3 3Z" fill="#666"/></svg>
<svg class="r" style="left:1741px;top:61.5px;" width="18" height="18" viewBox="0 0 18 18"><rect x="6.5" y="3.5" width="11" height="9" fill="#fff" stroke="#555" stroke-width="1.2"/><path d="M0 5 H5 M1 8 H5 M0 11 H5 M9 6.5 H15 M9 9 H13" stroke="#555" stroke-width="1"/></svg>
<div class="t " style="left:1761px;top:63.5px;font-size:11.3px;line-height:14px;color:#333;">Message Rules...</div>
<svg class="r" style="left:1852px;top:67.5px;" width="6" height="4" viewBox="0 0 6 4"><path d="M0.5 0.5 L5.5 0.5 L3 3Z" fill="#666"/></svg>
<svg class="r" style="left:1741px;top:84.9px;" width="18" height="18" viewBox="0 0 18 18"><rect x="3.5" y="1.5" width="13" height="16" fill="#fff" stroke="#2f6db8" stroke-width="1.5"/><circle cx="10" cy="7" r="2.5" fill="#2f6db8"/><path d="M6 14 C6 10 14 10 14 14Z" fill="#2f6db8"/><path d="M2 5 H5 M2 9 H5 M2 13 H5" stroke="#2f6db8" stroke-width="1.3"/></svg>
<div class="t " style="left:1761px;top:86.4px;font-size:11.9px;line-height:15px;color:#333;">Contacts...</div>
<svg class="r" style="left:1823px;top:90.9px;" width="6" height="4" viewBox="0 0 6 4"><path d="M0.5 0.5 L5.5 0.5 L3 3Z" fill="#666"/></svg>
<svg class="r" style="left:1741px;top:108px;" width="18" height="18" viewBox="0 0 18 18"><path d="M9 2 C14 2 17 5 17 9 C17 13 14 16 9 16 C7.5 16 6 15.6 5 15 L1.5 17 L2.5 13.5 C1.6 12.3 1 10.8 1 9 C1 5 4 2 9 2Z" fill="#fff" stroke="#9c5bb5" stroke-width="1.3"/><path d="M6 8 H12 M6 11 H10" stroke="#9c5bb5" stroke-width="1.2"/></svg>
<div class="t " style="left:1761px;top:109.5px;font-size:11.9px;line-height:15px;color:#333;">Show Chats...</div>
<svg class="r" style="left:1838px;top:114px;" width="6" height="4" viewBox="0 0 6 4"><path d="M0.5 0.5 L5.5 0.5 L3 3Z" fill="#666"/></svg>
<div class="r" style="left:2px;top:149px;width:1916px;height:35px;background:#e9e9e9;"></div>
<div class="r" style="left:2px;top:149px;width:1914px;height:1px;background:#d9d9d9;"></div>
<div class="r" style="left:2px;top:184px;width:1914px;height:1px;background:#cfcfcf;"></div>
<div class="t " style="left:7px;top:157.5px;font-size:12px;line-height:15px;color:#444;">Drag a column h</div>
<div class="t " style="left:425px;top:157.5px;font-size:12px;line-height:15px;color:#444;">ta</div>
<svg class="r" style="left:1692px;top:157px;" width="16" height="20" viewBox="0 0 16 20"><rect x="1" y="3" width="14" height="2" fill="#3b73b5"/><rect x="5.5" y="1" width="5" height="2" fill="#3b73b5"/><rect x="2" y="6" width="12" height="13" fill="#555"/><rect x="4.6" y="8" width="1.6" height="9" fill="#e9e9e9"/><rect x="7.3" y="8" width="1.6" height="9" fill="#e9e9e9"/><rect x="10" y="8" width="1.6" height="9" fill="#e9e9e9"/></svg>
<div class="r" style="left:1714px;top:154px;width:199px;height:27px;background:#fff;border:1px solid #c9c9c9;box-sizing:border-box;"></div>
<svg class="r" style="left:1718px;top:161px;" width="12" height="12" viewBox="0 0 12 12"><circle cx="6" cy="6" r="5" fill="none" stroke="#666"/><rect x="5.4" y="3" width="1.2" height="4" fill="#666"/><rect x="5.4" y="8" width="1.2" height="1.2" fill="#666"/></svg>
<div class="t " style="left:1738px;top:160.0px;font-size:13.2px;line-height:16px;color:#444;">Ytria default</div>
<svg class="r" style="left:1899px;top:165px;" width="9" height="5" viewBox="0 0 9 5"><path d="M0 0 L8 0 L4 4Z" fill="#555"/></svg>
<div class="r" style="left:0px;top:184px;width:3px;height:853px;background:#d8d8d8;"></div>
<div class="r" style="left:3px;top:184px;width:43px;height:834px;background:#935ca9;"></div>
<div class="r" style="left:2px;top:1018px;width:43px;height:19px;background:#7a4fc8;"></div>
<svg class="r" style="left:0px;top:184px;" width="46" height="36" viewBox="0 0 46 36"><g fill="none" stroke="#f5e6fb" stroke-width="1.5"><path d="M22 26.5 H9.5 V10.5 H28.5 V16"/><path d="M9.5 14.5 H28 M9.5 18.8 H25 M9.5 22.8 H23 M14.5 10.5 V26.5 M19.5 10.5 V26.5"/></g><rect x="9" y="9.5" width="20" height="2.5" fill="#f5e6fb"/><path d="M27.5 15.5 L21.5 25.5 H26.5 L22.5 33 L34.5 21 H29.5 L34 15.5Z" fill="#f5e6fb" stroke="#925ba8" stroke-width="0.6"/><path d="M36.5 16.5 L42 21.8 L36.5 27" fill="none" stroke="#f5e6fb" stroke-width="2.2"/></svg>
<div class="r" style="left:1867px;top:185px;width:44px;height:852px;background:#935ca9;"></div>
<div class="r" style="left:1867px;top:185px;width:1px;height:852px;background:#7d5a8f;"></div>
<div class="r" style="left:1910px;top:185px;width:1px;height:852px;background:#8a6a9c;"></div>
<div class="r" style="left:1867px;top:184px;width:44px;height:5px;background:#5c36ae;"></div>
<div class="r" style="left:1867px;top:1032px;width:44px;height:5px;background:#7a4fc8;"></div>
<svg class="r" style="left:1867px;top:184px;" width="44" height="36" viewBox="0 0 44 36"><path d="M13 13 L7.5 19 L13 25" fill="none" stroke="#f6e6fb" stroke-width="2"/><rect x="19.8" y="7.8" width="16.4" height="23.4" fill="none" stroke="#f6e6fb" stroke-width="1.7"/><path d="M25 12.5 H33 M25 17 H32 M25 21.5 H30 M25 26 H33" stroke="#f6e6fb" stroke-width="1.5"/><path d="M22.5 12.5 H23.5 M22.5 17 H23.5 M22.5 21.5 H23.5 M22.5 26 H23.5" stroke="#f6e6fb" stroke-width="1.5"/></svg>
<div class="r" style="left:1917px;top:185px;width:1px;height:852px;background:#d6d6d6;"></div>
<div class="r" style="left:1912px;top:597px;width:4px;height:25px;background:#d0d0d0;"></div>
<div class="r" style="left:47px;top:185px;width:1803px;height:851px;background:#fff;"></div>
<div class="r" style="left:1126px;top:185px;width:724px;height:64px;background:#f8f8f8;"></div>
<div class="r" style="left:47px;top:249px;width:1803px;height:1px;background:#d0d0d0;"></div>
<div class="t " style="left:47px;top:193.0px;font-size:12.5px;line-height:16px;color:#222;">System</div>
<div class="t " style="left:112px;top:193.0px;font-size:12.5px;line-height:16px;color:#1a5fae;font-weight:bold;">User Info</div>
<div class="r" style="left:48px;top:216px;width:62px;height:1px;background:#b8b8b8;"></div>
<div class="r" style="left:109px;top:192px;width:1px;height:24px;background:#d0d0d0;"></div>
<div class="r" style="left:110px;top:215px;width:1016px;height:2px;background:#2a6f96;"></div>
<div class="r" style="left:64px;top:222px;width:1px;height:27px;background:#d5d5d5;"></div>
<div class="r" style="left:84px;top:222px;width:1px;height:27px;background:#d5d5d5;"></div>
<div class="r" style="left:109px;top:222px;width:1px;height:27px;background:#d5d5d5;"></div>
<svg class="r" style="left:49px;top:225px;" width="10" height="14" viewBox="0 0 10 14"><path d="M2.5 6 V4.5 A2.5 2.5 0 0 1 7.5 4.5 V6" fill="none" stroke="#e0b55a" stroke-width="1.6"/><rect x="1" y="6" width="8" height="7" fill="#e8b64e"/><rect x="4.3" y="8" width="1.4" height="3" fill="#fff"/></svg>
<svg class="r" style="left:69px;top:225px;" width="10" height="14" viewBox="0 0 10 14"><path d="M2.5 6 V4.5 A2.5 2.5 0 0 1 7.5 4.5 V6" fill="none" stroke="#e0b55a" stroke-width="1.6"/><rect x="1" y="6" width="8" height="7" fill="#e8b64e"/><rect x="4.3" y="8" width="1.4" height="3" fill="#fff"/></svg>
<svg class="r" style="left:89px;top:225px;" width="10" height="14" viewBox="0 0 10 14"><path d="M2.5 6 V4.5 A2.5 2.5 0 0 1 7.5 4.5 V6" fill="none" stroke="#e0b55a" stroke-width="1.6"/><rect x="1" y="6" width="8" height="7" fill="#e8b64e"/><rect x="4.3" y="8" width="1.4" height="3" fill="#fff"/></svg>
<div class="t " style="left:104px;top:226.5px;font-size:12px;line-height:15px;color:#222;">:</div>
<div class="t " style="left:112px;top:225.5px;font-size:13px;line-height:16px;color:#222;">User Display Name</div>
<svg class="r" style="left:271px;top:229px;" width="10" height="6" viewBox="0 0 10 6"><path d="M0 6 L5 0 L10 6Z" fill="#c8c8c8"/></svg>
<div class="r" style="left:286px;top:216px;width:255px;height:33px;background:#0a74d8;"></div>
<div class="t " style="left:289px;top:225.5px;font-size:13px;line-height:16px;color:#fff;">Username</div>
<div class="r" style="left:541px;top:219px;width:1px;height:30px;background:#dcdcdc;"></div>
<div class="t " style="left:544px;top:226.0px;font-size:12.5px;line-height:16px;color:#222;">User Type</div>
<div class="r" style="left:605px;top:219px;width:1px;height:30px;background:#dcdcdc;"></div>
<div class="t " style="left:608px;top:226.0px;font-size:12.5px;line-height:16px;color:#222;">S...</div>
<div class="r" style="left:629px;top:219px;width:1px;height:30px;background:#dcdcdc;"></div>
<div class="t " style="left:632px;top:226.0px;font-size:12.5px;line-height:16px;color:#222;">Sign-in status</div>
<div class="r" style="left:725px;top:219px;width:1px;height:30px;background:#dcdcdc;"></div>
<div class="t " style="left:728px;top:226.0px;font-size:12.5px;line-height:16px;color:#222;">Last signed in on - ...</div>
<div class="r" style="left:853px;top:219px;width:1px;height:30px;background:#dcdcdc;"></div>
<div class="t " style="left:856px;top:226.0px;font-size:12.5px;line-height:16px;color:#222;">Locatio...</div>
<div class="r" style="left:909px;top:219px;width:1px;height:30px;background:#dcdcdc;"></div>
<div class="t " style="left:912px;top:226.0px;font-size:12.5px;line-height:16px;color:#222;">Effective Assigned Licen...</div>
<div class="r" style="left:1061px;top:219px;width:1px;height:30px;background:#dcdcdc;"></div>
<div class="t " style="left:1064px;top:226.0px;font-size:12.5px;line-height:16px;color:#222;">Unit Cos...</div>
<div class="r" style="left:1125px;top:219px;width:1px;height:30px;background:#dcdcdc;"></div>
<div class="r" style="left:64px;top:249px;width:1px;height:28px;background:#ececec;"></div>
<div class="r" style="left:84px;top:249px;width:1px;height:28px;background:#ececec;"></div>
<div class="r" style="left:109px;top:249px;width:1px;height:28px;background:#ececec;"></div>
<div class="r" style="left:47px;top:277px;width:1079px;height:1px;background:#efefef;"></div>
<svg class="r" style="left:67px;top:255px;" width="16" height="16" viewBox="0 0 16 16"><circle cx="8" cy="4.6" r="3.8" fill="#2b7cc7"/><path d="M1 15 C1.5 10.5 4.5 9.6 8 9.6 C11.5 9.6 14.5 10.5 15 15 Z" fill="#2b7cc7"/></svg>
<div class="t " style="left:112px;top:256.5px;font-size:12.8px;line-height:16px;color:#222;">Automate Bot</div>
<div class="clip" style="left:286px;top:249px;width:254px;height:28px;">
<div class="t " style="left:2px;top:7.5px;font-size:12.8px;line-height:16px;color:#222;">AutomateB@M365x85832012.OnMicrosoft.com</div>
</div>
<div class="r" style="left:285px;top:249px;width:2px;height:28px;background:#1f5d86;"></div>
<div class="r" style="left:540px;top:249px;width:1px;height:28px;background:#2a7fb8;"></div>
<div class="r" style="left:605px;top:250px;width:24px;height:27px;background:#d4d4d4;"></div>
<div class="r" style="left:726px;top:250px;width:126px;height:27px;background:#d4d4d4;"></div>
<div class="t " style="left:544px;top:256.0px;font-size:13.3px;line-height:17px;color:#222;">Member</div>
<svg class="r" style="left:632px;top:255px;" width="16" height="16" viewBox="0 0 16 16"><circle cx="8" cy="8" r="7.5" fill="#1f9a67"/><path d="M4 8.2 L7 11 L12 5.2" fill="none" stroke="#fff" stroke-width="2"/></svg>
<div class="t " style="left:650px;top:256.5px;font-size:13px;line-height:16px;color:#222;">Allowed</div>
<div class="t " style="left:856px;top:256.5px;font-size:13px;line-height:16px;color:#222;">US</div>
<div class="t " style="left:912px;top:256.5px;font-size:13px;line-height:16px;color:#222;">-- Unlicensed --</div>
<div class="r" style="left:1062px;top:250px;width:63px;height:27px;background:#d4d4d4;"></div>
<div class="r" style="left:853px;top:249px;width:1px;height:28px;background:#f0f0f0;"></div>
<div class="r" style="left:909px;top:249px;width:1px;height:28px;background:#f0f0f0;"></div>
<div class="r" style="left:1061px;top:249px;width:1px;height:28px;background:#f0f0f0;"></div>
<div class="r" style="left:1125px;top:249px;width:1px;height:28px;background:#f0f0f0;"></div>
<div class="r" style="left:64px;top:277px;width:1px;height:28px;background:#ececec;"></div>
<div class="r" style="left:84px;top:277px;width:1px;height:28px;background:#ececec;"></div>
<div class="r" style="left:109px;top:277px;width:1px;height:28px;background:#ececec;"></div>
<div class="r" style="left:47px;top:305px;width:1079px;height:1px;background:#efefef;"></div>
<svg class="r" style="left:67px;top:283px;" width="16" height="16" viewBox="0 0 16 16"><circle cx="8" cy="4.6" r="3.8" fill="#2b7cc7"/><path d="M1 15 C1.5 10.5 4.5 9.6 8 9.6 C11.5 9.6 14.5 10.5 15 15 Z" fill="#2b7cc7"/></svg>
<div class="t " style="left:112px;top:284.5px;font-size:12.8px;line-height:16px;color:#222;">Autumn Ashley</div>
<div class="clip" style="left:286px;top:277px;width:254px;height:28px;">
<div class="t " style="left:2px;top:7.5px;font-size:12.8px;line-height:16px;color:#222;">Autumn.Ashley@M365x85832012.OnMicrosoft.com</div>
</div>
<div class="r" style="left:285px;top:277px;width:2px;height:28px;background:#1f5d86;"></div>
<div class="r" style="left:540px;top:277px;width:1px;height:28px;background:#2a7fb8;"></div>
<div class="r" style="left:605px;top:278px;width:24px;height:27px;background:#d4d4d4;"></div>
<div class="r" style="left:726px;top:278px;width:126px;height:27px;background:#d4d4d4;"></div>
<div class="t " style="left:544px;top:284.0px;font-size:13.3px;line-height:17px;color:#222;">Member</div>
<svg class="r" style="left:632px;top:283px;" width="16" height="16" viewBox="0 0 16 16"><circle cx="8" cy="8" r="7.5" fill="#1f9a67"/><path d="M4 8.2 L7 11 L12 5.2" fill="none" stroke="#fff" stroke-width="2"/></svg>
<div class="t " style="left:650px;top:284.5px;font-size:13px;line-height:16px;color:#222;">Allowed</div>
<div class="t " style="left:856px;top:284.5px;font-size:13px;line-height:16px;color:#222;">US</div>
<div class="t " style="left:912px;top:285.0px;font-size:11.7px;line-height:15px;color:#222;">MICROSOFT FLOW FREE</div>
<div class="t " style="left:1124px;top:284.5px;font-size:12.8px;line-height:16px;color:#222;width:60px;text-align:right;left:1064px;">33.75</div>
<div class="r" style="left:853px;top:277px;width:1px;height:28px;background:#f0f0f0;"></div>
<div class="r" style="left:909px;top:277px;width:1px;height:28px;background:#f0f0f0;"></div>
<div class="r" style="left:1061px;top:277px;width:1px;height:28px;background:#f0f0f0;"></div>
<div class="r" style="left:1125px;top:277px;width:1px;height:28px;background:#f0f0f0;"></div>
<div class="r" style="left:64px;top:305px;width:1px;height:28px;background:#ececec;"></div>
<div class="r" style="left:84px;top:305px;width:1px;height:28px;background:#ececec;"></div>
<div class="r" style="left:109px;top:305px;width:1px;height:28px;background:#ececec;"></div>
<div class="r" style="left:47px;top:333px;width:1079px;height:1px;background:#efefef;"></div>
<svg class="r" style="left:67px;top:311px;" width="16" height="16" viewBox="0 0 16 16"><circle cx="8" cy="4.6" r="3.8" fill="#2b7cc7"/><path d="M1 15 C1.5 10.5 4.5 9.6 8 9.6 C11.5 9.6 14.5 10.5 15 15 Z" fill="#2b7cc7"/></svg>
<div class="t " style="left:112px;top:312.5px;font-size:12.8px;line-height:16px;color:#222;">Autumn Gonzales</div>
<div class="clip" style="left:286px;top:305px;width:254px;height:28px;">
<div class="t " style="left:2px;top:7.5px;font-size:12.8px;line-height:16px;color:#222;">Autumn.Gonzales@M365x85832012.OnMicrosoft.com</div>
</div>
<div class="r" style="left:285px;top:305px;width:2px;height:28px;background:#1f5d86;"></div>
<div class="r" style="left:540px;top:305px;width:1px;height:28px;background:#2a7fb8;"></div>
<div class="r" style="left:605px;top:306px;width:24px;height:27px;background:#d4d4d4;"></div>
<div class="r" style="left:726px;top:306px;width:126px;height:27px;background:#d4d4d4;"></div>
<div class="t " style="left:544px;top:312.0px;font-size:13.3px;line-height:17px;color:#222;">Member</div>
<svg class="r" style="left:632px;top:311px;" width="16" height="16" viewBox="0 0 16 16"><circle cx="8" cy="8" r="7.5" fill="#1f9a67"/><path d="M4 8.2 L7 11 L12 5.2" fill="none" stroke="#fff" stroke-width="2"/></svg>
<div class="t " style="left:650px;top:312.5px;font-size:13px;line-height:16px;color:#222;">Allowed</div>
<div class="t " style="left:856px;top:312.5px;font-size:13px;line-height:16px;color:#222;">US</div>
<div class="t " style="left:912px;top:313.0px;font-size:11.7px;line-height:15px;color:#222;">MICROSOFT FLOW FREE</div>
<div class="t " style="left:1124px;top:312.5px;font-size:12.8px;line-height:16px;color:#222;width:60px;text-align:right;left:1064px;">33.75</div>
<div class="r" style="left:853px;top:305px;width:1px;height:28px;background:#f0f0f0;"></div>
<div class="r" style="left:909px;top:305px;width:1px;height:28px;background:#f0f0f0;"></div>
<div class="r" style="left:1061px;top:305px;width:1px;height:28px;background:#f0f0f0;"></div>
<div class="r" style="left:1125px;top:305px;width:1px;height:28px;background:#f0f0f0;"></div>
<div class="r" style="left:64px;top:333px;width:1px;height:28px;background:#ececec;"></div>
<div class="r" style="left:84px;top:333px;width:1px;height:28px;background:#ececec;"></div>
<div class="r" style="left:109px;top:333px;width:1px;height:28px;background:#ececec;"></div>
<div class="r" style="left:47px;top:361px;width:1079px;height:1px;background:#efefef;"></div>
<svg class="r" style="left:67px;top:339px;" width="16" height="16" viewBox="0 0 16 16"><circle cx="8" cy="4.6" r="3.8" fill="#2b7cc7"/><path d="M1 15 C1.5 10.5 4.5 9.6 8 9.6 C11.5 9.6 14.5 10.5 15 15 Z" fill="#2b7cc7"/></svg>
<div class="t " style="left:112px;top:340.5px;font-size:12.8px;line-height:16px;color:#222;">Autumn Hansley</div>
<div class="clip" style="left:286px;top:333px;width:254px;height:28px;">
<div class="t " style="left:2px;top:7.5px;font-size:12.8px;line-height:16px;color:#222;">Autumn.Hansley@M365x85832012.OnMicrosoft.com</div>
</div>
<div class="r" style="left:285px;top:333px;width:2px;height:28px;background:#1f5d86;"></div>
<div class="r" style="left:540px;top:333px;width:1px;height:28px;background:#2a7fb8;"></div>
<div class="r" style="left:605px;top:334px;width:24px;height:27px;background:#d4d4d4;"></div>
<div class="r" style="left:726px;top:334px;width:126px;height:27px;background:#d4d4d4;"></div>
<div class="t " style="left:544px;top:340.0px;font-size:13.3px;line-height:17px;color:#222;">Member</div>
<svg class="r" style="left:632px;top:339px;" width="16" height="16" viewBox="0 0 16 16"><circle cx="8" cy="8" r="7.5" fill="#1f9a67"/><path d="M4 8.2 L7 11 L12 5.2" fill="none" stroke="#fff" stroke-width="2"/></svg>
<div class="t " style="left:650px;top:340.5px;font-size:13px;line-height:16px;color:#222;">Allowed</div>
<div class="t " style="left:856px;top:340.5px;font-size:13px;line-height:16px;color:#222;">US</div>
<div class="t " style="left:912px;top:341.0px;font-size:11.7px;line-height:15px;color:#222;">MICROSOFT FLOW FREE</div>
<div class="t " style="left:1124px;top:340.5px;font-size:12.8px;line-height:16px;color:#222;width:60px;text-align:right;left:1064px;">33.75</div>
<div class="r" style="left:853px;top:333px;width:1px;height:28px;background:#f0f0f0;"></div>
<div class="r" style="left:909px;top:333px;width:1px;height:28px;background:#f0f0f0;"></div>
<div class="r" style="left:1061px;top:333px;width:1px;height:28px;background:#f0f0f0;"></div>
<div class="r" style="left:1125px;top:333px;width:1px;height:28px;background:#f0f0f0;"></div>
<div class="r" style="left:64px;top:361px;width:1px;height:28px;background:#ececec;"></div>
<div class="r" style="left:84px;top:361px;width:1px;height:28px;background:#ececec;"></div>
<div class="r" style="left:109px;top:361px;width:1px;height:28px;background:#ececec;"></div>
<div class="r" style="left:47px;top:389px;width:1079px;height:1px;background:#efefef;"></div>
<svg class="r" style="left:67px;top:367px;" width="16" height="16" viewBox="0 0 16 16"><circle cx="8" cy="4.6" r="3.8" fill="#2b7cc7"/><path d="M1 15 C1.5 10.5 4.5 9.6 8 9.6 C11.5 9.6 14.5 10.5 15 15 Z" fill="#2b7cc7"/></svg>
<div class="t " style="left:112px;top:368.5px;font-size:12.8px;line-height:16px;color:#222;">Avery Langley</div>
<div class="clip" style="left:286px;top:361px;width:254px;height:28px;">
<div class="t " style="left:2px;top:7.5px;font-size:12.8px;line-height:16px;color:#222;">Avery.Langley@M365x85832012.OnMicrosoft.com</div>
</div>
<div class="r" style="left:285px;top:361px;width:2px;height:28px;background:#1f5d86;"></div>
<div class="r" style="left:540px;top:361px;width:1px;height:28px;background:#2a7fb8;"></div>
<div class="r" style="left:605px;top:362px;width:24px;height:27px;background:#d4d4d4;"></div>
<div class="r" style="left:726px;top:362px;width:126px;height:27px;background:#d4d4d4;"></div>
<div class="t " style="left:544px;top:368.0px;font-size:13.3px;line-height:17px;color:#222;">Member</div>
<svg class="r" style="left:632px;top:367px;" width="16" height="16" viewBox="0 0 16 16"><circle cx="8" cy="8" r="7.5" fill="#1f9a67"/><path d="M4 8.2 L7 11 L12 5.2" fill="none" stroke="#fff" stroke-width="2"/></svg>
<div class="t " style="left:650px;top:368.5px;font-size:13px;line-height:16px;color:#222;">Allowed</div>
<div class="t " style="left:856px;top:368.5px;font-size:13px;line-height:16px;color:#222;">US</div>
<div class="t " style="left:912px;top:369.0px;font-size:11.7px;line-height:15px;color:#222;">MICROSOFT FLOW FREE</div>
<div class="t " style="left:1124px;top:368.5px;font-size:12.8px;line-height:16px;color:#222;width:60px;text-align:right;left:1064px;">33.75</div>
<div class="r" style="left:853px;top:361px;width:1px;height:28px;background:#f0f0f0;"></div>
<div class="r" style="left:909px;top:361px;width:1px;height:28px;background:#f0f0f0;"></div>
<div class="r" style="left:1061px;top:361px;width:1px;height:28px;background:#f0f0f0;"></div>
<div class="r" style="left:1125px;top:361px;width:1px;height:28px;background:#f0f0f0;"></div>
<div class="r" style="left:64px;top:389px;width:1px;height:28px;background:#ececec;"></div>
<div class="r" style="left:84px;top:389px;width:1px;height:28px;background:#ececec;"></div>
<div class="r" style="left:109px;top:389px;width:1px;height:28px;background:#ececec;"></div>
<div class="r" style="left:47px;top:417px;width:1079px;height:1px;background:#efefef;"></div>
<svg class="r" style="left:67px;top:395px;" width="16" height="16" viewBox="0 0 16 16"><circle cx="8" cy="4.6" r="3.8" fill="#2b7cc7"/><path d="M1 15 C1.5 10.5 4.5 9.6 8 9.6 C11.5 9.6 14.5 10.5 15 15 Z" fill="#2b7cc7"/></svg>
<div class="t " style="left:112px;top:396.5px;font-size:12.8px;line-height:16px;color:#222;">Avery Raven</div>
<div class="clip" style="left:286px;top:389px;width:254px;height:28px;">
<div class="t " style="left:2px;top:7.5px;font-size:12.8px;line-height:16px;color:#222;">Avery.Raven@M365x85832012.OnMicrosoft.com</div>
</div>
<div class="r" style="left:285px;top:389px;width:2px;height:28px;background:#1f5d86;"></div>
<div class="r" style="left:540px;top:389px;width:1px;height:28px;background:#2a7fb8;"></div>
<div class="r" style="left:605px;top:390px;width:24px;height:27px;background:#d4d4d4;"></div>
<div class="r" style="left:726px;top:390px;width:126px;height:27px;background:#d4d4d4;"></div>
<div class="t " style="left:544px;top:396.0px;font-size:13.3px;line-height:17px;color:#222;">Member</div>
<svg class="r" style="left:632px;top:395px;" width="16" height="16" viewBox="0 0 16 16"><circle cx="8" cy="8" r="7.5" fill="#1f9a67"/><path d="M4 8.2 L7 11 L12 5.2" fill="none" stroke="#fff" stroke-width="2"/></svg>
<div class="t " style="left:650px;top:396.5px;font-size:13px;line-height:16px;color:#222;">Allowed</div>
<div class="t " style="left:856px;top:396.5px;font-size:13px;line-height:16px;color:#222;">US</div>
<div class="t " style="left:912px;top:397.0px;font-size:11.7px;line-height:15px;color:#222;">MICROSOFT FLOW FREE</div>
<div class="t " style="left:1124px;top:396.5px;font-size:12.8px;line-height:16px;color:#222;width:60px;text-align:right;left:1064px;">33.75</div>
<div class="r" style="left:853px;top:389px;width:1px;height:28px;background:#f0f0f0;"></div>
<div class="r" style="left:909px;top:389px;width:1px;height:28px;background:#f0f0f0;"></div>
<div class="r" style="left:1061px;top:389px;width:1px;height:28px;background:#f0f0f0;"></div>
<div class="r" style="left:1125px;top:389px;width:1px;height:28px;background:#f0f0f0;"></div>
<div class="r" style="left:64px;top:417px;width:1px;height:28px;background:#ececec;"></div>
<div class="r" style="left:84px;top:417px;width:1px;height:28px;background:#ececec;"></div>
<div class="r" style="left:109px;top:417px;width:1px;height:28px;background:#ececec;"></div>
<div class="r" style="left:47px;top:445px;width:1079px;height:1px;background:#efefef;"></div>
<svg class="r" style="left:67px;top:423px;" width="16" height="16" viewBox="0 0 16 16"><circle cx="8" cy="4.6" r="3.8" fill="#2b7cc7"/><path d="M1 15 C1.5 10.5 4.5 9.6 8 9.6 C11.5 9.6 14.5 10.5 15 15 Z" fill="#2b7cc7"/></svg>
<div class="t " style="left:112px;top:424.5px;font-size:12.8px;line-height:16px;color:#222;">Bailey Roberts</div>
<div class="clip" style="left:286px;top:417px;width:254px;height:28px;">
<div class="t " style="left:2px;top:7.5px;font-size:12.8px;line-height:16px;color:#222;">Bailey.Roberts@M365x85832012.OnMicrosoft.com</div>
</div>
<div class="r" style="left:285px;top:417px;width:2px;height:28px;background:#1f5d86;"></div>
<div class="r" style="left:540px;top:417px;width:1px;height:28px;background:#2a7fb8;"></div>
<div class="r" style="left:605px;top:418px;width:24px;height:27px;background:#d4d4d4;"></div>
<div class="r" style="left:726px;top:418px;width:126px;height:27px;background:#d4d4d4;"></div>
<div class="t " style="left:544px;top:424.0px;font-size:13.3px;line-height:17px;color:#222;">Member</div>
<svg class="r" style="left:632px;top:423px;" width="16" height="16" viewBox="0 0 16 16"><circle cx="8" cy="8" r="7.5" fill="#1f9a67"/><path d="M4 8.2 L7 11 L12 5.2" fill="none" stroke="#fff" stroke-width="2"/></svg>
<div class="t " style="left:650px;top:424.5px;font-size:13px;line-height:16px;color:#222;">Allowed</div>
<div class="t " style="left:856px;top:424.5px;font-size:13px;line-height:16px;color:#222;">US</div>
<div class="t " style="left:912px;top:425.0px;font-size:11.7px;line-height:15px;color:#222;">MICROSOFT FLOW FREE</div>
<div class="t " style="left:1124px;top:424.5px;font-size:12.8px;line-height:16px;color:#222;width:60px;text-align:right;left:1064px;">33.75</div>
<div class="r" style="left:853px;top:417px;width:1px;height:28px;background:#f0f0f0;"></div>
<div class="r" style="left:909px;top:417px;width:1px;height:28px;background:#f0f0f0;"></div>
<div class="r" style="left:1061px;top:417px;width:1px;height:28px;background:#f0f0f0;"></div>
<div class="r" style="left:1125px;top:417px;width:1px;height:28px;background:#f0f0f0;"></div>
<div class="r" style="left:64px;top:445px;width:1px;height:28px;background:#ececec;"></div>
<div class="r" style="left:84px;top:445px;width:1px;height:28px;background:#ececec;"></div>
<div class="r" style="left:109px;top:445px;width:1px;height:28px;background:#ececec;"></div>
<div class="r" style="left:47px;top:473px;width:1079px;height:1px;background:#efefef;"></div>
<svg class="r" style="left:67px;top:451px;" width="16" height="16" viewBox="0 0 16 16"><circle cx="8" cy="4.6" r="3.8" fill="#2b7cc7"/><path d="M1 15 C1.5 10.5 4.5 9.6 8 9.6 C11.5 9.6 14.5 10.5 15 15 Z" fill="#2b7cc7"/></svg>
<div class="t " style="left:112px;top:452.5px;font-size:12.8px;line-height:16px;color:#222;">Beau Anderson</div>
<div class="clip" style="left:286px;top:445px;width:254px;height:28px;">
<div class="t " style="left:2px;top:7.5px;font-size:12.8px;line-height:16px;color:#222;">Beau.Anderson@M365x85832012.OnMicrosoft.com</div>
</div>
<div class="r" style="left:285px;top:445px;width:2px;height:28px;background:#1f5d86;"></div>
<div class="r" style="left:540px;top:445px;width:1px;height:28px;background:#2a7fb8;"></div>
<div class="r" style="left:605px;top:446px;width:24px;height:27px;background:#d4d4d4;"></div>
<div class="r" style="left:726px;top:446px;width:126px;height:27px;background:#d4d4d4;"></div>
<div class="t " style="left:544px;top:452.0px;font-size:13.3px;line-height:17px;color:#222;">Member</div>
<svg class="r" style="left:632px;top:451px;" width="16" height="16" viewBox="0 0 16 16"><circle cx="8" cy="8" r="7.5" fill="#1f9a67"/><path d="M4 8.2 L7 11 L12 5.2" fill="none" stroke="#fff" stroke-width="2"/></svg>
<div class="t " style="left:650px;top:452.5px;font-size:13px;line-height:16px;color:#222;">Allowed</div>
<div class="t " style="left:856px;top:452.5px;font-size:13px;line-height:16px;color:#222;">US</div>
<div class="t " style="left:912px;top:453.0px;font-size:11.7px;line-height:15px;color:#222;">MICROSOFT FLOW FREE</div>
<div class="t " style="left:1124px;top:452.5px;font-size:12.8px;line-height:16px;color:#222;width:60px;text-align:right;left:1064px;">33.75</div>
<div class="r" style="left:853px;top:445px;width:1px;height:28px;background:#f0f0f0;"></div>
<div class="r" style="left:909px;top:445px;width:1px;height:28px;background:#f0f0f0;"></div>
<div class="r" style="left:1061px;top:445px;width:1px;height:28px;background:#f0f0f0;"></div>
<div class="r" style="left:1125px;top:445px;width:1px;height:28px;background:#f0f0f0;"></div>
<div class="r" style="left:64px;top:473px;width:1px;height:28px;background:#ececec;"></div>
<div class="r" style="left:84px;top:473px;width:1px;height:28px;background:#ececec;"></div>
<div class="r" style="left:109px;top:473px;width:1px;height:28px;background:#ececec;"></div>
<div class="r" style="left:47px;top:501px;width:1079px;height:1px;background:#efefef;"></div>
<svg class="r" style="left:67px;top:479px;" width="16" height="16" viewBox="0 0 16 16"><circle cx="8" cy="4.6" r="3.8" fill="#2b7cc7"/><path d="M1 15 C1.5 10.5 4.5 9.6 8 9.6 C11.5 9.6 14.5 10.5 15 15 Z" fill="#2b7cc7"/></svg>
<div class="t " style="left:112px;top:480.5px;font-size:12.8px;line-height:16px;color:#222;">Beckett Robinson</div>
<div class="clip" style="left:286px;top:473px;width:254px;height:28px;">
<div class="t " style="left:2px;top:7.5px;font-size:12.8px;line-height:16px;color:#222;">Beckett.Robinson@M365x85832012.OnMicrosoft.com</div>
</div>
<div class="r" style="left:285px;top:473px;width:2px;height:28px;background:#1f5d86;"></div>
<div class="r" style="left:540px;top:473px;width:1px;height:28px;background:#2a7fb8;"></div>
<div class="r" style="left:605px;top:474px;width:24px;height:27px;background:#d4d4d4;"></div>
<div class="r" style="left:726px;top:474px;width:126px;height:27px;background:#d4d4d4;"></div>
<div class="t " style="left:544px;top:480.0px;font-size:13.3px;line-height:17px;color:#222;">Member</div>
<svg class="r" style="left:632px;top:479px;" width="16" height="16" viewBox="0 0 16 16"><circle cx="8" cy="8" r="7.5" fill="#1f9a67"/><path d="M4 8.2 L7 11 L12 5.2" fill="none" stroke="#fff" stroke-width="2"/></svg>
<div class="t " style="left:650px;top:480.5px;font-size:13px;line-height:16px;color:#222;">Allowed</div>
<div class="t " style="left:856px;top:480.5px;font-size:13px;line-height:16px;color:#222;">US</div>
<div class="t " style="left:912px;top:481.0px;font-size:11.7px;line-height:15px;color:#222;">MICROSOFT FLOW FREE</div>
<div class="t " style="left:1124px;top:480.5px;font-size:12.8px;line-height:16px;color:#222;width:60px;text-align:right;left:1064px;">33.75</div>
<div class="r" style="left:853px;top:473px;width:1px;height:28px;background:#f0f0f0;"></div>
<div class="r" style="left:909px;top:473px;width:1px;height:28px;background:#f0f0f0;"></div>
<div class="r" style="left:1061px;top:473px;width:1px;height:28px;background:#f0f0f0;"></div>
<div class="r" style="left:1125px;top:473px;width:1px;height:28px;background:#f0f0f0;"></div>
<div class="r" style="left:64px;top:501px;width:1px;height:28px;background:#ececec;"></div>
<div class="r" style="left:84px;top:501px;width:1px;height:28px;background:#ececec;"></div>
<div class="r" style="left:109px;top:501px;width:1px;height:28px;background:#ececec;"></div>
<div class="r" style="left:47px;top:529px;width:1079px;height:1px;background:#efefef;"></div>
<svg class="r" style="left:67px;top:507px;" width="16" height="16" viewBox="0 0 16 16"><circle cx="8" cy="4.6" r="3.8" fill="#2b7cc7"/><path d="M1 15 C1.5 10.5 4.5 9.6 8 9.6 C11.5 9.6 14.5 10.5 15 15 Z" fill="#2b7cc7"/></svg>
<div class="t " style="left:112px;top:508.5px;font-size:12.8px;line-height:16px;color:#222;">Beckham Jackson</div>
<div class="clip" style="left:286px;top:501px;width:254px;height:28px;">
<div class="t " style="left:2px;top:7.5px;font-size:12.8px;line-height:16px;color:#222;">Beckham.Jackson@M365x85832012.OnMicrosoft.com</div>
</div>
<div class="r" style="left:285px;top:501px;width:2px;height:28px;background:#1f5d86;"></div>
<div class="r" style="left:540px;top:501px;width:1px;height:28px;background:#2a7fb8;"></div>
<div class="r" style="left:605px;top:502px;width:24px;height:27px;background:#d4d4d4;"></div>
<div class="r" style="left:726px;top:502px;width:126px;height:27px;background:#d4d4d4;"></div>
<div class="t " style="left:544px;top:508.0px;font-size:13.3px;line-height:17px;color:#222;">Member</div>
<svg class="r" style="left:632px;top:507px;" width="16" height="16" viewBox="0 0 16 16"><circle cx="8" cy="8" r="7.5" fill="#1f9a67"/><path d="M4 8.2 L7 11 L12 5.2" fill="none" stroke="#fff" stroke-width="2"/></svg>
<div class="t " style="left:650px;top:508.5px;font-size:13px;line-height:16px;color:#222;">Allowed</div>
<div class="t " style="left:856px;top:508.5px;font-size:13px;line-height:16px;color:#222;">US</div>
<div class="t " style="left:912px;top:509.0px;font-size:11.7px;line-height:15px;color:#222;">MICROSOFT FLOW FREE</div>
<div class="t " style="left:1124px;top:508.5px;font-size:12.8px;line-height:16px;color:#222;width:60px;text-align:right;left:1064px;">33.75</div>
<div class="r" style="left:853px;top:501px;width:1px;height:28px;background:#f0f0f0;"></div>
<div class="r" style="left:909px;top:501px;width:1px;height:28px;background:#f0f0f0;"></div>
<div class="r" style="left:1061px;top:501px;width:1px;height:28px;background:#f0f0f0;"></div>
<div class="r" style="left:1125px;top:501px;width:1px;height:28px;background:#f0f0f0;"></div>
<div class="r" style="left:48px;top:530px;width:1078px;height:27px;background:#0b6fd1;"></div>
<div class="r" style="left:64px;top:529px;width:1px;height:28px;background:#cfe0f5;"></div>
<div class="r" style="left:84px;top:529px;width:1px;height:28px;background:#cfe0f5;"></div>
<div class="r" style="left:109px;top:529px;width:1px;height:28px;background:#cfe0f5;"></div>
<div class="r" style="left:47px;top:557px;width:1079px;height:1px;background:#efefef;"></div>
<svg class="r" style="left:67px;top:535px;" width="16" height="16" viewBox="0 0 16 16"><circle cx="8" cy="5" r="3.6" fill="none" stroke="#fff" stroke-width="1.4"/><path d="M1.5 15 C2 10.5 5 9.5 8 9.5 C11 9.5 14 10.5 14.5 15 Z" fill="none" stroke="#fff" stroke-width="1.4"/></svg>
<div class="t " style="left:112px;top:536.5px;font-size:12.8px;line-height:16px;color:#fff;">Bennett Perez</div>
<div class="clip" style="left:286px;top:529px;width:254px;height:28px;">
<div class="t " style="left:2px;top:7.5px;font-size:12.8px;line-height:16px;color:#fff;">Bennett.Perez@M365x85832012.OnMicrosoft.com</div>
</div>
<div class="r" style="left:285px;top:529px;width:2px;height:28px;background:#1f5d86;"></div>
<div class="r" style="left:540px;top:529px;width:1px;height:28px;background:#2a7fb8;"></div>
<div class="r" style="left:605px;top:530px;width:24px;height:27px;background:#d4d4d4;"></div>
<div class="r" style="left:726px;top:530px;width:126px;height:27px;background:#d4d4d4;"></div>
<div class="t " style="left:544px;top:536.0px;font-size:13.3px;line-height:17px;color:#222;">Member</div>
<svg class="r" style="left:632px;top:535px;" width="16" height="16" viewBox="0 0 16 16"><circle cx="8" cy="8" r="7.5" fill="#1f9a67"/><path d="M4 8.2 L7 11 L12 5.2" fill="none" stroke="#fff" stroke-width="2"/></svg>
<div class="t " style="left:650px;top:536.5px;font-size:13px;line-height:16px;color:#222;">Allowed</div>
<div class="t " style="left:856px;top:536.5px;font-size:13px;line-height:16px;color:#222;">US</div>
<div class="t " style="left:912px;top:537.0px;font-size:11.7px;line-height:15px;color:#222;">MICROSOFT FLOW FREE</div>
<div class="t " style="left:1124px;top:536.5px;font-size:12.8px;line-height:16px;color:#222;width:60px;text-align:right;left:1064px;">33.75</div>
<div class="r" style="left:853px;top:529px;width:1px;height:28px;background:#f0f0f0;"></div>
<div class="r" style="left:909px;top:529px;width:1px;height:28px;background:#f0f0f0;"></div>
<div class="r" style="left:1061px;top:529px;width:1px;height:28px;background:#f0f0f0;"></div>
<div class="r" style="left:1125px;top:529px;width:1px;height:28px;background:#f0f0f0;"></div>
<div class="r" style="left:64px;top:557px;width:1px;height:28px;background:#ececec;"></div>
<div class="r" style="left:84px;top:557px;width:1px;height:28px;background:#ececec;"></div>
<div class="r" style="left:109px;top:557px;width:1px;height:28px;background:#ececec;"></div>
<div class="r" style="left:47px;top:585px;width:1079px;height:1px;background:#efefef;"></div>
<svg class="r" style="left:67px;top:563px;" width="16" height="16" viewBox="0 0 16 16"><circle cx="8" cy="4.6" r="3.8" fill="#2b7cc7"/><path d="M1 15 C1.5 10.5 4.5 9.6 8 9.6 C11.5 9.6 14.5 10.5 15 15 Z" fill="#2b7cc7"/></svg>
<div class="t " style="left:112px;top:564.5px;font-size:12.8px;line-height:16px;color:#222;">Bentley Peterson</div>
<div class="clip" style="left:286px;top:557px;width:254px;height:28px;">
<div class="t " style="left:2px;top:7.5px;font-size:12.8px;line-height:16px;color:#222;">Bentley.Peterson@M365x85832012.OnMicrosoft.com</div>
</div>
<div class="r" style="left:285px;top:557px;width:2px;height:28px;background:#1f5d86;"></div>
<div class="r" style="left:540px;top:557px;width:1px;height:28px;background:#2a7fb8;"></div>
<div class="r" style="left:605px;top:558px;width:24px;height:27px;background:#d4d4d4;"></div>
<div class="r" style="left:726px;top:558px;width:126px;height:27px;background:#d4d4d4;"></div>
<div class="t " style="left:544px;top:564.0px;font-size:13.3px;line-height:17px;color:#222;">Member</div>
<svg class="r" style="left:632px;top:563px;" width="16" height="16" viewBox="0 0 16 16"><circle cx="8" cy="8" r="7.5" fill="#1f9a67"/><path d="M4 8.2 L7 11 L12 5.2" fill="none" stroke="#fff" stroke-width="2"/></svg>
<div class="t " style="left:650px;top:564.5px;font-size:13px;line-height:16px;color:#222;">Allowed</div>
<div class="t " style="left:856px;top:564.5px;font-size:13px;line-height:16px;color:#222;">US</div>
<div class="t " style="left:912px;top:565.0px;font-size:11.7px;line-height:15px;color:#222;">MICROSOFT FLOW FREE</div>
<div class="t " style="left:1124px;top:564.5px;font-size:12.8px;line-height:16px;color:#222;width:60px;text-align:right;left:1064px;">33.75</div>
<div class="r" style="left:853px;top:557px;width:1px;height:28px;background:#f0f0f0;"></div>
<div class="r" style="left:909px;top:557px;width:1px;height:28px;background:#f0f0f0;"></div>
<div class="r" style="left:1061px;top:557px;width:1px;height:28px;background:#f0f0f0;"></div>
<div class="r" style="left:1125px;top:557px;width:1px;height:28px;background:#f0f0f0;"></div>
<div class="r" style="left:64px;top:585px;width:1px;height:28px;background:#ececec;"></div>
<div class="r" style="left:84px;top:585px;width:1px;height:28px;background:#ececec;"></div>
<div class="r" style="left:109px;top:585px;width:1px;height:28px;background:#ececec;"></div>
<div class="r" style="left:47px;top:613px;width:1079px;height:1px;background:#efefef;"></div>
<svg class="r" style="left:67px;top:591px;" width="16" height="16" viewBox="0 0 16 16"><circle cx="8" cy="4.6" r="3.8" fill="#2b7cc7"/><path d="M1 15 C1.5 10.5 4.5 9.6 8 9.6 C11.5 9.6 14.5 10.5 15 15 Z" fill="#2b7cc7"/></svg>
<svg class="r" style="left:48px;top:592px;" width="14" height="14" viewBox="0 0 14 14"><circle cx="7" cy="7" r="6" fill="none" stroke="#999" stroke-width="1.3"/><circle cx="7" cy="7" r="3" fill="#999"/></svg>
<div class="t " style="left:112px;top:592.5px;font-size:12.8px;line-height:16px;color:#222;">Bianca Pisani</div>
<div class="clip" style="left:286px;top:585px;width:254px;height:28px;">
<div class="t " style="left:2px;top:7.5px;font-size:12.8px;line-height:16px;color:#222;">BiancaP@M365x85832012.OnMicrosoft.com</div>
</div>
<div class="r" style="left:285px;top:585px;width:2px;height:28px;background:#1f5d86;"></div>
<div class="r" style="left:540px;top:585px;width:1px;height:28px;background:#2a7fb8;"></div>
<div class="r" style="left:605px;top:586px;width:24px;height:27px;background:#d4d4d4;"></div>
<div class="r" style="left:726px;top:586px;width:126px;height:27px;background:#d4d4d4;"></div>
<div class="t " style="left:544px;top:592.0px;font-size:13.3px;line-height:17px;color:#222;">Member</div>
<svg class="r" style="left:632px;top:591px;" width="16" height="16" viewBox="0 0 16 16"><circle cx="8" cy="8" r="7.5" fill="#1f9a67"/><path d="M4 8.2 L7 11 L12 5.2" fill="none" stroke="#fff" stroke-width="2"/></svg>
<div class="t " style="left:650px;top:592.5px;font-size:13px;line-height:16px;color:#222;">Allowed</div>
<div class="t " style="left:856px;top:592.5px;font-size:13px;line-height:16px;color:#222;">US</div>
<div class="t " style="left:912px;top:593.0px;font-size:11.7px;line-height:15px;color:#222;">MICROSOFT FLOW FREE</div>
<div class="t " style="left:1124px;top:592.5px;font-size:12.8px;line-height:16px;color:#222;width:60px;text-align:right;left:1064px;">33.75</div>
<div class="r" style="left:853px;top:585px;width:1px;height:28px;background:#f0f0f0;"></div>
<div class="r" style="left:909px;top:585px;width:1px;height:28px;background:#f0f0f0;"></div>
<div class="r" style="left:1061px;top:585px;width:1px;height:28px;background:#f0f0f0;"></div>
<div class="r" style="left:1125px;top:585px;width:1px;height:28px;background:#f0f0f0;"></div>
<div class="r" style="left:64px;top:613px;width:1px;height:28px;background:#ececec;"></div>
<div class="r" style="left:84px;top:613px;width:1px;height:28px;background:#ececec;"></div>
<div class="r" style="left:109px;top:613px;width:1px;height:28px;background:#ececec;"></div>
<div class="r" style="left:47px;top:641px;width:1079px;height:1px;background:#efefef;"></div>
<svg class="r" style="left:67px;top:619px;" width="16" height="16" viewBox="0 0 16 16"><circle cx="8" cy="4.6" r="3.8" fill="#2b7cc7"/><path d="M1 15 C1.5 10.5 4.5 9.6 8 9.6 C11.5 9.6 14.5 10.5 15 15 Z" fill="#2b7cc7"/></svg>
<div class="t " style="left:112px;top:620.5px;font-size:12.8px;line-height:16px;color:#222;">BinghuaY</div>
<div class="clip" style="left:286px;top:613px;width:254px;height:28px;">
<div class="t " style="left:2px;top:7.5px;font-size:12.8px;line-height:16px;color:#222;">BinghuaY@M365x85832012.onmicrosoft.com</div>
</div>
<div class="r" style="left:285px;top:613px;width:2px;height:28px;background:#1f5d86;"></div>
<div class="r" style="left:540px;top:613px;width:1px;height:28px;background:#2a7fb8;"></div>
<div class="r" style="left:605px;top:614px;width:24px;height:27px;background:#d4d4d4;"></div>
<div class="r" style="left:726px;top:614px;width:126px;height:27px;background:#d4d4d4;"></div>
<div class="t " style="left:544px;top:620.0px;font-size:13.3px;line-height:17px;color:#222;">Member</div>
<svg class="r" style="left:632px;top:619px;" width="16" height="16" viewBox="0 0 16 16"><circle cx="8" cy="8" r="7.5" fill="#1f9a67"/><path d="M4 8.2 L7 11 L12 5.2" fill="none" stroke="#fff" stroke-width="2"/></svg>
<div class="t " style="left:650px;top:620.5px;font-size:13px;line-height:16px;color:#222;">Allowed</div>
<div class="t " style="left:856px;top:620.5px;font-size:13px;line-height:16px;color:#222;">US</div>
<div class="t " style="left:912px;top:621.0px;font-size:11.7px;line-height:15px;color:#222;">MICROSOFT FLOW FREE</div>
<div class="t " style="left:1124px;top:620.5px;font-size:12.8px;line-height:16px;color:#222;width:60px;text-align:right;left:1064px;">33.75</div>
<div class="r" style="left:853px;top:613px;width:1px;height:28px;background:#f0f0f0;"></div>
<div class="r" style="left:909px;top:613px;width:1px;height:28px;background:#f0f0f0;"></div>
<div class="r" style="left:1061px;top:613px;width:1px;height:28px;background:#f0f0f0;"></div>
<div class="r" style="left:1125px;top:613px;width:1px;height:28px;background:#f0f0f0;"></div>
<div class="r" style="left:64px;top:641px;width:1px;height:28px;background:#ececec;"></div>
<div class="r" style="left:84px;top:641px;width:1px;height:28px;background:#ececec;"></div>
<div class="r" style="left:109px;top:641px;width:1px;height:28px;background:#ececec;"></div>
<div class="r" style="left:47px;top:669px;width:1079px;height:1px;background:#efefef;"></div>
<svg class="r" style="left:67px;top:647px;" width="16" height="16" viewBox="0 0 16 16"><circle cx="8" cy="4.6" r="3.8" fill="#2b7cc7"/><path d="M1 15 C1.5 10.5 4.5 9.6 8 9.6 C11.5 9.6 14.5 10.5 15 15 Z" fill="#2b7cc7"/></svg>
<div class="t " style="left:112px;top:648.5px;font-size:12.8px;line-height:16px;color:#222;">Blake Jackson</div>
<div class="clip" style="left:286px;top:641px;width:254px;height:28px;">
<div class="t " style="left:2px;top:7.5px;font-size:12.8px;line-height:16px;color:#222;">Blake.Jackson@M365x85832012.OnMicrosoft.com</div>
</div>
<div class="r" style="left:285px;top:641px;width:2px;height:28px;background:#1f5d86;"></div>
<div class="r" style="left:540px;top:641px;width:1px;height:28px;background:#2a7fb8;"></div>
<div class="r" style="left:605px;top:642px;width:24px;height:27px;background:#d4d4d4;"></div>
<div class="r" style="left:726px;top:642px;width:126px;height:27px;background:#d4d4d4;"></div>
<div class="t " style="left:544px;top:648.0px;font-size:13.3px;line-height:17px;color:#222;">Member</div>
<svg class="r" style="left:632px;top:647px;" width="16" height="16" viewBox="0 0 16 16"><circle cx="8" cy="8" r="7.5" fill="#1f9a67"/><path d="M4 8.2 L7 11 L12 5.2" fill="none" stroke="#fff" stroke-width="2"/></svg>
<div class="t " style="left:650px;top:648.5px;font-size:13px;line-height:16px;color:#222;">Allowed</div>
<div class="t " style="left:856px;top:648.5px;font-size:13px;line-height:16px;color:#222;">US</div>
<div class="t " style="left:912px;top:649.0px;font-size:11.7px;line-height:15px;color:#222;">MICROSOFT FLOW FREE</div>
<div class="t " style="left:1124px;top:648.5px;font-size:12.8px;line-height:16px;color:#222;width:60px;text-align:right;left:1064px;">33.75</div>
<div class="r" style="left:853px;top:641px;width:1px;height:28px;background:#f0f0f0;"></div>
<div class="r" style="left:909px;top:641px;width:1px;height:28px;background:#f0f0f0;"></div>
<div class="r" style="left:1061px;top:641px;width:1px;height:28px;background:#f0f0f0;"></div>
<div class="r" style="left:1125px;top:641px;width:1px;height:28px;background:#f0f0f0;"></div>
<div class="r" style="left:64px;top:669px;width:1px;height:28px;background:#ececec;"></div>
<div class="r" style="left:84px;top:669px;width:1px;height:28px;background:#ececec;"></div>
<div class="r" style="left:109px;top:669px;width:1px;height:28px;background:#ececec;"></div>
<div class="r" style="left:47px;top:697px;width:1079px;height:1px;background:#efefef;"></div>
<svg class="r" style="left:67px;top:675px;" width="16" height="16" viewBox="0 0 16 16"><circle cx="8" cy="4.6" r="3.8" fill="#2b7cc7"/><path d="M1 15 C1.5 10.5 4.5 9.6 8 9.6 C11.5 9.6 14.5 10.5 15 15 Z" fill="#2b7cc7"/></svg>
<div class="t " style="left:112px;top:676.5px;font-size:12.8px;line-height:16px;color:#222;">Blake Wright</div>
<div class="clip" style="left:286px;top:669px;width:254px;height:28px;">
<div class="t " style="left:2px;top:7.5px;font-size:12.8px;line-height:16px;color:#222;">Blake.Wright@M365x85832012.OnMicrosoft.com</div>
</div>
<div class="r" style="left:285px;top:669px;width:2px;height:28px;background:#1f5d86;"></div>
<div class="r" style="left:540px;top:669px;width:1px;height:28px;background:#2a7fb8;"></div>
<div class="r" style="left:605px;top:670px;width:24px;height:27px;background:#d4d4d4;"></div>
<div class="r" style="left:726px;top:670px;width:126px;height:27px;background:#d4d4d4;"></div>
<div class="t " style="left:544px;top:676.0px;font-size:13.3px;line-height:17px;color:#222;">Member</div>
<svg class="r" style="left:632px;top:675px;" width="16" height="16" viewBox="0 0 16 16"><circle cx="8" cy="8" r="7.5" fill="#1f9a67"/><path d="M4 8.2 L7 11 L12 5.2" fill="none" stroke="#fff" stroke-width="2"/></svg>
<div class="t " style="left:650px;top:676.5px;font-size:13px;line-height:16px;color:#222;">Allowed</div>
<div class="t " style="left:856px;top:676.5px;font-size:13px;line-height:16px;color:#222;">US</div>
<div class="t " style="left:912px;top:677.0px;font-size:11.7px;line-height:15px;color:#222;">MICROSOFT FLOW FREE</div>
<div class="t " style="left:1124px;top:676.5px;font-size:12.8px;line-height:16px;color:#222;width:60px;text-align:right;left:1064px;">33.75</div>
<div class="r" style="left:853px;top:669px;width:1px;height:28px;background:#f0f0f0;"></div>
<div class="r" style="left:909px;top:669px;width:1px;height:28px;background:#f0f0f0;"></div>
<div class="r" style="left:1061px;top:669px;width:1px;height:28px;background:#f0f0f0;"></div>
<div class="r" style="left:1125px;top:669px;width:1px;height:28px;background:#f0f0f0;"></div>
<div class="r" style="left:64px;top:697px;width:1px;height:28px;background:#ececec;"></div>
<div class="r" style="left:84px;top:697px;width:1px;height:28px;background:#ececec;"></div>
<div class="r" style="left:109px;top:697px;width:1px;height:28px;background:#ececec;"></div>
<div class="r" style="left:47px;top:725px;width:1079px;height:1px;background:#efefef;"></div>
<svg class="r" style="left:67px;top:703px;" width="16" height="16" viewBox="0 0 16 16"><circle cx="8" cy="4.6" r="3.8" fill="#2b7cc7"/><path d="M1 15 C1.5 10.5 4.5 9.6 8 9.6 C11.5 9.6 14.5 10.5 15 15 Z" fill="#2b7cc7"/></svg>
<div class="t " style="left:112px;top:704.5px;font-size:12.8px;line-height:16px;color:#222;">Blakely Adams</div>
<div class="clip" style="left:286px;top:697px;width:254px;height:28px;">
<div class="t " style="left:2px;top:7.5px;font-size:12.8px;line-height:16px;color:#222;">Blakely.Adams@M365x85832012.OnMicrosoft.com</div>
</div>
<div class="r" style="left:285px;top:697px;width:2px;height:28px;background:#1f5d86;"></div>
<div class="r" style="left:540px;top:697px;width:1px;height:28px;background:#2a7fb8;"></div>
<div class="r" style="left:605px;top:698px;width:24px;height:27px;background:#d4d4d4;"></div>
<div class="r" style="left:726px;top:698px;width:126px;height:27px;background:#d4d4d4;"></div>
<div class="t " style="left:544px;top:704.0px;font-size:13.3px;line-height:17px;color:#222;">Member</div>
<svg class="r" style="left:632px;top:703px;" width="16" height="16" viewBox="0 0 16 16"><circle cx="8" cy="8" r="7.5" fill="#1f9a67"/><path d="M4 8.2 L7 11 L12 5.2" fill="none" stroke="#fff" stroke-width="2"/></svg>
<div class="t " style="left:650px;top:704.5px;font-size:13px;line-height:16px;color:#222;">Allowed</div>
<div class="t " style="left:856px;top:704.5px;font-size:13px;line-height:16px;color:#222;">US</div>
<div class="t " style="left:912px;top:705.0px;font-size:11.7px;line-height:15px;color:#222;">MICROSOFT FLOW FREE</div>
<div class="t " style="left:1124px;top:704.5px;font-size:12.8px;line-height:16px;color:#222;width:60px;text-align:right;left:1064px;">33.75</div>
<div class="r" style="left:853px;top:697px;width:1px;height:28px;background:#f0f0f0;"></div>
<div class="r" style="left:909px;top:697px;width:1px;height:28px;background:#f0f0f0;"></div>
<div class="r" style="left:1061px;top:697px;width:1px;height:28px;background:#f0f0f0;"></div>
<div class="r" style="left:1125px;top:697px;width:1px;height:28px;background:#f0f0f0;"></div>
<div class="r" style="left:64px;top:725px;width:1px;height:28px;background:#ececec;"></div>
<div class="r" style="left:84px;top:725px;width:1px;height:28px;background:#ececec;"></div>
<div class="r" style="left:109px;top:725px;width:1px;height:28px;background:#ececec;"></div>
<div class="r" style="left:47px;top:753px;width:1079px;height:1px;background:#efefef;"></div>
<svg class="r" style="left:67px;top:731px;" width="16" height="16" viewBox="0 0 16 16"><circle cx="8" cy="4.6" r="3.8" fill="#2b7cc7"/><path d="M1 15 C1.5 10.5 4.5 9.6 8 9.6 C11.5 9.6 14.5 10.5 15 15 Z" fill="#2b7cc7"/></svg>
<div class="t " style="left:112px;top:732.5px;font-size:12.8px;line-height:16px;color:#222;">Bod Dole</div>
<div class="clip" style="left:286px;top:725px;width:254px;height:28px;">
<div class="t " style="left:2px;top:7.5px;font-size:12.8px;line-height:16px;color:#222;">bdole@M365x85832012.onmicrosoft.com</div>
</div>
<div class="r" style="left:285px;top:725px;width:2px;height:28px;background:#1f5d86;"></div>
<div class="r" style="left:540px;top:725px;width:1px;height:28px;background:#2a7fb8;"></div>
<div class="r" style="left:605px;top:726px;width:24px;height:27px;background:#d4d4d4;"></div>
<div class="r" style="left:726px;top:726px;width:126px;height:27px;background:#d4d4d4;"></div>
<div class="t " style="left:544px;top:732.0px;font-size:13.3px;line-height:17px;color:#222;">Member</div>
<svg class="r" style="left:632px;top:731px;" width="16" height="16" viewBox="0 0 16 16"><circle cx="8" cy="8" r="7.5" fill="#1f9a67"/><path d="M4 8.2 L7 11 L12 5.2" fill="none" stroke="#fff" stroke-width="2"/></svg>
<div class="t " style="left:650px;top:732.5px;font-size:13px;line-height:16px;color:#222;">Allowed</div>
<div class="t " style="left:856px;top:732.5px;font-size:13px;line-height:16px;color:#222;">US</div>
<div class="t " style="left:912px;top:733.0px;font-size:11.7px;line-height:15px;color:#222;">MICROSOFT FLOW FREE</div>
<div class="t " style="left:1124px;top:732.5px;font-size:12.8px;line-height:16px;color:#222;width:60px;text-align:right;left:1064px;">33.75</div>
<div class="r" style="left:853px;top:725px;width:1px;height:28px;background:#f0f0f0;"></div>
<div class="r" style="left:909px;top:725px;width:1px;height:28px;background:#f0f0f0;"></div>
<div class="r" style="left:1061px;top:725px;width:1px;height:28px;background:#f0f0f0;"></div>
<div class="r" style="left:1125px;top:725px;width:1px;height:28px;background:#f0f0f0;"></div>
<div class="r" style="left:64px;top:753px;width:1px;height:28px;background:#ececec;"></div>
<div class="r" style="left:84px;top:753px;width:1px;height:28px;background:#ececec;"></div>
<div class="r" style="left:109px;top:753px;width:1px;height:28px;background:#ececec;"></div>
<div class="r" style="left:47px;top:781px;width:1079px;height:1px;background:#efefef;"></div>
<svg class="r" style="left:67px;top:759px;" width="16" height="16" viewBox="0 0 16 16"><circle cx="8" cy="4.6" r="3.8" fill="#2b7cc7"/><path d="M1 15 C1.5 10.5 4.5 9.6 8 9.6 C11.5 9.6 14.5 10.5 15 15 Z" fill="#2b7cc7"/></svg>
<div class="t " style="left:112px;top:760.5px;font-size:12.8px;line-height:16px;color:#222;">Brantley Langley</div>
<div class="clip" style="left:286px;top:753px;width:254px;height:28px;">
<div class="t " style="left:2px;top:7.5px;font-size:12.8px;line-height:16px;color:#222;">Brantley.Langley@M365x85832012.OnMicrosoft.com</div>
</div>
<div class="r" style="left:285px;top:753px;width:2px;height:28px;background:#1f5d86;"></div>
<div class="r" style="left:540px;top:753px;width:1px;height:28px;background:#2a7fb8;"></div>
<div class="r" style="left:605px;top:754px;width:24px;height:27px;background:#d4d4d4;"></div>
<div class="r" style="left:726px;top:754px;width:126px;height:27px;background:#d4d4d4;"></div>
<div class="t " style="left:544px;top:760.0px;font-size:13.3px;line-height:17px;color:#222;">Member</div>
<svg class="r" style="left:632px;top:759px;" width="16" height="16" viewBox="0 0 16 16"><circle cx="8" cy="8" r="7.5" fill="#1f9a67"/><path d="M4 8.2 L7 11 L12 5.2" fill="none" stroke="#fff" stroke-width="2"/></svg>
<div class="t " style="left:650px;top:760.5px;font-size:13px;line-height:16px;color:#222;">Allowed</div>
<div class="t " style="left:856px;top:760.5px;font-size:13px;line-height:16px;color:#222;">US</div>
<div class="t " style="left:912px;top:761.0px;font-size:11.7px;line-height:15px;color:#222;">MICROSOFT FLOW FREE</div>
<div class="t " style="left:1124px;top:760.5px;font-size:12.8px;line-height:16px;color:#222;width:60px;text-align:right;left:1064px;">33.75</div>
<div class="r" style="left:853px;top:753px;width:1px;height:28px;background:#f0f0f0;"></div>
<div class="r" style="left:909px;top:753px;width:1px;height:28px;background:#f0f0f0;"></div>
<div class="r" style="left:1061px;top:753px;width:1px;height:28px;background:#f0f0f0;"></div>
<div class="r" style="left:1125px;top:753px;width:1px;height:28px;background:#f0f0f0;"></div>
<div class="r" style="left:64px;top:781px;width:1px;height:28px;background:#ececec;"></div>
<div class="r" style="left:84px;top:781px;width:1px;height:28px;background:#ececec;"></div>
<div class="r" style="left:109px;top:781px;width:1px;height:28px;background:#ececec;"></div>
<div class="r" style="left:47px;top:809px;width:1079px;height:1px;background:#efefef;"></div>
<svg class="r" style="left:67px;top:787px;" width="16" height="16" viewBox="0 0 16 16"><circle cx="8" cy="4.6" r="3.8" fill="#2b7cc7"/><path d="M1 15 C1.5 10.5 4.5 9.6 8 9.6 C11.5 9.6 14.5 10.5 15 15 Z" fill="#2b7cc7"/></svg>
<div class="t " style="left:112px;top:788.5px;font-size:12.8px;line-height:16px;color:#222;">Brayden Walker</div>
<div class="clip" style="left:286px;top:781px;width:254px;height:28px;">
<div class="t " style="left:2px;top:7.5px;font-size:12.8px;line-height:16px;color:#222;">Brayden.Walker@M365x85832012.OnMicrosoft.com</div>
</div>
<div class="r" style="left:285px;top:781px;width:2px;height:28px;background:#1f5d86;"></div>
<div class="r" style="left:540px;top:781px;width:1px;height:28px;background:#2a7fb8;"></div>
<div class="r" style="left:605px;top:782px;width:24px;height:27px;background:#d4d4d4;"></div>
<div class="r" style="left:726px;top:782px;width:126px;height:27px;background:#d4d4d4;"></div>
<div class="t " style="left:544px;top:788.0px;font-size:13.3px;line-height:17px;color:#222;">Member</div>
<svg class="r" style="left:632px;top:787px;" width="16" height="16" viewBox="0 0 16 16"><circle cx="8" cy="8" r="7.5" fill="#1f9a67"/><path d="M4 8.2 L7 11 L12 5.2" fill="none" stroke="#fff" stroke-width="2"/></svg>
<div class="t " style="left:650px;top:788.5px;font-size:13px;line-height:16px;color:#222;">Allowed</div>
<div class="t " style="left:856px;top:788.5px;font-size:13px;line-height:16px;color:#222;">US</div>
<div class="t " style="left:912px;top:789.0px;font-size:11.7px;line-height:15px;color:#222;">MICROSOFT FLOW FREE</div>
<div class="t " style="left:1124px;top:788.5px;font-size:12.8px;line-height:16px;color:#222;width:60px;text-align:right;left:1064px;">33.75</div>
<div class="r" style="left:853px;top:781px;width:1px;height:28px;background:#f0f0f0;"></div>
<div class="r" style="left:909px;top:781px;width:1px;height:28px;background:#f0f0f0;"></div>
<div class="r" style="left:1061px;top:781px;width:1px;height:28px;background:#f0f0f0;"></div>
<div class="r" style="left:1125px;top:781px;width:1px;height:28px;background:#f0f0f0;"></div>
<div class="r" style="left:64px;top:809px;width:1px;height:28px;background:#ececec;"></div>
<div class="r" style="left:84px;top:809px;width:1px;height:28px;background:#ececec;"></div>
<div class="r" style="left:109px;top:809px;width:1px;height:28px;background:#ececec;"></div>
<div class="r" style="left:47px;top:837px;width:1079px;height:1px;background:#efefef;"></div>
<svg class="r" style="left:67px;top:815px;" width="16" height="16" viewBox="0 0 16 16"><circle cx="8" cy="4.6" r="3.8" fill="#2b7cc7"/><path d="M1 15 C1.5 10.5 4.5 9.6 8 9.6 C11.5 9.6 14.5 10.5 15 15 Z" fill="#2b7cc7"/></svg>
<div class="t " style="left:112px;top:816.5px;font-size:12.8px;line-height:16px;color:#222;">Braylon Rollins</div>
<div class="clip" style="left:286px;top:809px;width:254px;height:28px;">
<div class="t " style="left:2px;top:7.5px;font-size:12.8px;line-height:16px;color:#222;">Braylon.Rollins@M365x85832012.OnMicrosoft.com</div>
</div>
<div class="r" style="left:285px;top:809px;width:2px;height:28px;background:#1f5d86;"></div>
<div class="r" style="left:540px;top:809px;width:1px;height:28px;background:#2a7fb8;"></div>
<div class="r" style="left:605px;top:810px;width:24px;height:27px;background:#ececec;"></div>
<svg class="r" style="left:611px;top:816px;" width="14" height="14" viewBox="0 0 14 14"><rect x="0.5" y="0.5" width="13" height="13" fill="#f4f4f4" stroke="#c6c6c6"/><path d="M3.5 7 L6 10 L10.5 3.5" fill="none" stroke="#c3c3c3" stroke-width="1.4"/></svg>
<div class="r" style="left:726px;top:810px;width:126px;height:27px;background:#d4d4d4;"></div>
<div class="t " style="left:544px;top:816.0px;font-size:13.3px;line-height:17px;color:#222;">Member</div>
<svg class="r" style="left:632px;top:815px;" width="16" height="16" viewBox="0 0 16 16"><circle cx="8" cy="8" r="7.5" fill="#1f9a67"/><path d="M4 8.2 L7 11 L12 5.2" fill="none" stroke="#fff" stroke-width="2"/></svg>
<div class="t " style="left:650px;top:816.5px;font-size:13px;line-height:16px;color:#222;">Allowed</div>
<div class="t " style="left:856px;top:816.5px;font-size:13px;line-height:16px;color:#222;">US</div>
<div class="t " style="left:912px;top:817.0px;font-size:11.7px;line-height:15px;color:#222;">MICROSOFT FLOW FREE</div>
<div class="t " style="left:1124px;top:816.5px;font-size:12.8px;line-height:16px;color:#222;width:60px;text-align:right;left:1064px;">33.75</div>
<div class="r" style="left:853px;top:809px;width:1px;height:28px;background:#f0f0f0;"></div>
<div class="r" style="left:909px;top:809px;width:1px;height:28px;background:#f0f0f0;"></div>
<div class="r" style="left:1061px;top:809px;width:1px;height:28px;background:#f0f0f0;"></div>
<div class="r" style="left:1125px;top:809px;width:1px;height:28px;background:#f0f0f0;"></div>
<div class="r" style="left:64px;top:837px;width:1px;height:28px;background:#ececec;"></div>
<div class="r" style="left:84px;top:837px;width:1px;height:28px;background:#ececec;"></div>
<div class="r" style="left:109px;top:837px;width:1px;height:28px;background:#ececec;"></div>
<div class="r" style="left:47px;top:865px;width:1079px;height:1px;background:#efefef;"></div>
<svg class="r" style="left:67px;top:843px;" width="16" height="16" viewBox="0 0 16 16"><circle cx="8" cy="4.6" r="3.8" fill="#2b7cc7"/><path d="M1 15 C1.5 10.5 4.5 9.6 8 9.6 C11.5 9.6 14.5 10.5 15 15 Z" fill="#2b7cc7"/></svg>
<div class="t " style="left:112px;top:844.5px;font-size:12.8px;line-height:16px;color:#222;">Brenden Brown</div>
<div class="clip" style="left:286px;top:837px;width:254px;height:28px;">
<div class="t " style="left:2px;top:7.5px;font-size:12.8px;line-height:16px;color:#222;">Brenden.Brown@M365x85832012.OnMicrosoft.com</div>
</div>
<div class="r" style="left:285px;top:837px;width:2px;height:28px;background:#1f5d86;"></div>
<div class="r" style="left:540px;top:837px;width:1px;height:28px;background:#2a7fb8;"></div>
<div class="r" style="left:605px;top:838px;width:24px;height:27px;background:#ececec;"></div>
<svg class="r" style="left:611px;top:844px;" width="14" height="14" viewBox="0 0 14 14"><rect x="0.5" y="0.5" width="13" height="13" fill="#f4f4f4" stroke="#c6c6c6"/><path d="M3.5 7 L6 10 L10.5 3.5" fill="none" stroke="#c3c3c3" stroke-width="1.4"/></svg>
<div class="r" style="left:726px;top:838px;width:126px;height:27px;background:#d4d4d4;"></div>
<div class="t " style="left:544px;top:844.0px;font-size:13.3px;line-height:17px;color:#222;">Member</div>
<svg class="r" style="left:632px;top:843px;" width="16" height="16" viewBox="0 0 16 16"><circle cx="8" cy="8" r="7.5" fill="#1f9a67"/><path d="M4 8.2 L7 11 L12 5.2" fill="none" stroke="#fff" stroke-width="2"/></svg>
<div class="t " style="left:650px;top:844.5px;font-size:13px;line-height:16px;color:#222;">Allowed</div>
<div class="t " style="left:856px;top:844.5px;font-size:13px;line-height:16px;color:#222;">US</div>
<div class="t " style="left:912px;top:845.0px;font-size:11.7px;line-height:15px;color:#222;">MICROSOFT FLOW FREE</div>
<div class="t " style="left:1124px;top:844.5px;font-size:12.8px;line-height:16px;color:#222;width:60px;text-align:right;left:1064px;">33.75</div>
<div class="r" style="left:853px;top:837px;width:1px;height:28px;background:#f0f0f0;"></div>
<div class="r" style="left:909px;top:837px;width:1px;height:28px;background:#f0f0f0;"></div>
<div class="r" style="left:1061px;top:837px;width:1px;height:28px;background:#f0f0f0;"></div>
<div class="r" style="left:1125px;top:837px;width:1px;height:28px;background:#f0f0f0;"></div>
<div class="r" style="left:64px;top:865px;width:1px;height:28px;background:#ececec;"></div>
<div class="r" style="left:84px;top:865px;width:1px;height:28px;background:#ececec;"></div>
<div class="r" style="left:109px;top:865px;width:1px;height:28px;background:#ececec;"></div>
<div class="r" style="left:47px;top:893px;width:1079px;height:1px;background:#efefef;"></div>
<svg class="r" style="left:67px;top:871px;" width="16" height="16" viewBox="0 0 16 16"><circle cx="8" cy="4.6" r="3.8" fill="#2b7cc7"/><path d="M1 15 C1.5 10.5 4.5 9.6 8 9.6 C11.5 9.6 14.5 10.5 15 15 Z" fill="#2b7cc7"/></svg>
<div class="t " style="left:112px;top:872.5px;font-size:12.8px;line-height:16px;color:#222;">Brett Mcintosh</div>
<div class="clip" style="left:286px;top:865px;width:254px;height:28px;">
<div class="t " style="left:2px;top:7.5px;font-size:12.8px;line-height:16px;color:#222;">Brett.Mcintosh@M365x85832012.OnMicrosoft.com</div>
</div>
<div class="r" style="left:285px;top:865px;width:2px;height:28px;background:#1f5d86;"></div>
<div class="r" style="left:540px;top:865px;width:1px;height:28px;background:#2a7fb8;"></div>
<div class="r" style="left:605px;top:866px;width:24px;height:27px;background:#ececec;"></div>
<svg class="r" style="left:611px;top:872px;" width="14" height="14" viewBox="0 0 14 14"><rect x="0.5" y="0.5" width="13" height="13" fill="#f4f4f4" stroke="#c6c6c6"/><path d="M3.5 7 L6 10 L10.5 3.5" fill="none" stroke="#c3c3c3" stroke-width="1.4"/></svg>
<div class="r" style="left:726px;top:866px;width:126px;height:27px;background:#d4d4d4;"></div>
<div class="t " style="left:544px;top:872.0px;font-size:13.3px;line-height:17px;color:#222;">Member</div>
<svg class="r" style="left:632px;top:871px;" width="16" height="16" viewBox="0 0 16 16"><circle cx="8" cy="8" r="7.5" fill="#1f9a67"/><path d="M4 8.2 L7 11 L12 5.2" fill="none" stroke="#fff" stroke-width="2"/></svg>
<div class="t " style="left:650px;top:872.5px;font-size:13px;line-height:16px;color:#222;">Allowed</div>
<div class="t " style="left:856px;top:872.5px;font-size:13px;line-height:16px;color:#222;">US</div>
<div class="t " style="left:912px;top:873.0px;font-size:11.7px;line-height:15px;color:#222;">MICROSOFT FLOW FREE</div>
<div class="t " style="left:1124px;top:872.5px;font-size:12.8px;line-height:16px;color:#222;width:60px;text-align:right;left:1064px;">33.75</div>
<div class="r" style="left:853px;top:865px;width:1px;height:28px;background:#f0f0f0;"></div>
<div class="r" style="left:909px;top:865px;width:1px;height:28px;background:#f0f0f0;"></div>
<div class="r" style="left:1061px;top:865px;width:1px;height:28px;background:#f0f0f0;"></div>
<div class="r" style="left:1125px;top:865px;width:1px;height:28px;background:#f0f0f0;"></div>
<div class="r" style="left:64px;top:893px;width:1px;height:28px;background:#ececec;"></div>
<div class="r" style="left:84px;top:893px;width:1px;height:28px;background:#ececec;"></div>
<div class="r" style="left:109px;top:893px;width:1px;height:28px;background:#ececec;"></div>
<div class="r" style="left:47px;top:921px;width:1079px;height:1px;background:#efefef;"></div>
<svg class="r" style="left:67px;top:899px;" width="16" height="16" viewBox="0 0 16 16"><circle cx="8" cy="4.6" r="3.8" fill="#2b7cc7"/><path d="M1 15 C1.5 10.5 4.5 9.6 8 9.6 C11.5 9.6 14.5 10.5 15 15 Z" fill="#2b7cc7"/></svg>
<svg class="r" style="left:48px;top:900px;" width="14" height="14" viewBox="0 0 14 14"><circle cx="7" cy="7" r="6" fill="none" stroke="#999" stroke-width="1.3"/><circle cx="7" cy="7" r="3" fill="#999"/></svg>
<div class="t " style="left:112px;top:900.5px;font-size:12.8px;line-height:16px;color:#222;">Brian Johnson (TAILSPIN)</div>
<div class="clip" style="left:286px;top:893px;width:254px;height:28px;">
<div class="t " style="left:2px;top:7.5px;font-size:12.8px;line-height:16px;color:#222;">BrianJ@M365x85832012.OnMicrosoft.com</div>
</div>
<div class="r" style="left:285px;top:893px;width:2px;height:28px;background:#1f5d86;"></div>
<div class="r" style="left:540px;top:893px;width:1px;height:28px;background:#2a7fb8;"></div>
<div class="r" style="left:605px;top:894px;width:24px;height:27px;background:#d4d4d4;"></div>
<div class="r" style="left:726px;top:894px;width:126px;height:27px;background:#d4d4d4;"></div>
<div class="t " style="left:544px;top:900.0px;font-size:13.3px;line-height:17px;color:#222;">Member</div>
<svg class="r" style="left:632px;top:899px;" width="16" height="16" viewBox="0 0 16 16"><circle cx="8" cy="8" r="7.5" fill="#1f9a67"/><path d="M4 8.2 L7 11 L12 5.2" fill="none" stroke="#fff" stroke-width="2"/></svg>
<div class="t " style="left:650px;top:900.5px;font-size:13px;line-height:16px;color:#222;">Allowed</div>
<div class="t " style="left:856px;top:900.5px;font-size:13px;line-height:16px;color:#222;">US</div>
<div class="t " style="left:912px;top:901.5px;font-size:11.9px;line-height:15px;color:#222;">[3] MICROSOFT FLOW FR</div>
<div class="t " style="left:1064px;top:900.5px;font-size:13px;line-height:16px;color:#222;">[3]33.75;7.</div>
<div class="r" style="left:853px;top:893px;width:1px;height:28px;background:#f0f0f0;"></div>
<div class="r" style="left:909px;top:893px;width:1px;height:28px;background:#f0f0f0;"></div>
<div class="r" style="left:1061px;top:893px;width:1px;height:28px;background:#f0f0f0;"></div>
<div class="r" style="left:1125px;top:893px;width:1px;height:28px;background:#f0f0f0;"></div>
<div class="r" style="left:64px;top:921px;width:1px;height:28px;background:#ececec;"></div>
<div class="r" style="left:84px;top:921px;width:1px;height:28px;background:#ececec;"></div>
<div class="r" style="left:109px;top:921px;width:1px;height:28px;background:#ececec;"></div>
<div class="r" style="left:47px;top:949px;width:1079px;height:1px;background:#efefef;"></div>
<svg class="r" style="left:67px;top:927px;" width="16" height="16" viewBox="0 0 16 16"><circle cx="8" cy="4.6" r="3.8" fill="#2b7cc7"/><path d="M1 15 C1.5 10.5 4.5 9.6 8 9.6 C11.5 9.6 14.5 10.5 15 15 Z" fill="#2b7cc7"/></svg>
<div class="t " style="left:112px;top:928.5px;font-size:12.8px;line-height:16px;color:#222;">Bridger Sexton</div>
<div class="clip" style="left:286px;top:921px;width:254px;height:28px;">
<div class="t " style="left:2px;top:7.5px;font-size:12.8px;line-height:16px;color:#222;">Bridger.Sexton@M365x85832012.OnMicrosoft.com</div>
</div>
<div class="r" style="left:285px;top:921px;width:2px;height:28px;background:#1f5d86;"></div>
<div class="r" style="left:540px;top:921px;width:1px;height:28px;background:#2a7fb8;"></div>
<div class="r" style="left:605px;top:922px;width:24px;height:27px;background:#ececec;"></div>
<svg class="r" style="left:611px;top:928px;" width="14" height="14" viewBox="0 0 14 14"><rect x="0.5" y="0.5" width="13" height="13" fill="#f4f4f4" stroke="#c6c6c6"/><path d="M3.5 7 L6 10 L10.5 3.5" fill="none" stroke="#c3c3c3" stroke-width="1.4"/></svg>
<div class="r" style="left:726px;top:922px;width:126px;height:27px;background:#d4d4d4;"></div>
<div class="t " style="left:544px;top:928.0px;font-size:13.3px;line-height:17px;color:#222;">Member</div>
<svg class="r" style="left:632px;top:927px;" width="16" height="16" viewBox="0 0 16 16"><circle cx="8" cy="8" r="7.5" fill="#1f9a67"/><path d="M4 8.2 L7 11 L12 5.2" fill="none" stroke="#fff" stroke-width="2"/></svg>
<div class="t " style="left:650px;top:928.5px;font-size:13px;line-height:16px;color:#222;">Allowed</div>
<div class="t " style="left:856px;top:928.5px;font-size:13px;line-height:16px;color:#222;">US</div>
<div class="t " style="left:912px;top:929.0px;font-size:11.7px;line-height:15px;color:#222;">MICROSOFT FLOW FREE</div>
<div class="t " style="left:1124px;top:928.5px;font-size:12.8px;line-height:16px;color:#222;width:60px;text-align:right;left:1064px;">33.75</div>
<div class="r" style="left:853px;top:921px;width:1px;height:28px;background:#f0f0f0;"></div>
<div class="r" style="left:909px;top:921px;width:1px;height:28px;background:#f0f0f0;"></div>
<div class="r" style="left:1061px;top:921px;width:1px;height:28px;background:#f0f0f0;"></div>
<div class="r" style="left:1125px;top:921px;width:1px;height:28px;background:#f0f0f0;"></div>
<div class="r" style="left:64px;top:949px;width:1px;height:28px;background:#ececec;"></div>
<div class="r" style="left:84px;top:949px;width:1px;height:28px;background:#ececec;"></div>
<div class="r" style="left:109px;top:949px;width:1px;height:28px;background:#ececec;"></div>
<div class="r" style="left:47px;top:977px;width:1079px;height:1px;background:#efefef;"></div>
<svg class="r" style="left:67px;top:955px;" width="16" height="16" viewBox="0 0 16 16"><circle cx="8" cy="4.6" r="3.8" fill="#2b7cc7"/><path d="M1 15 C1.5 10.5 4.5 9.6 8 9.6 C11.5 9.6 14.5 10.5 15 15 Z" fill="#2b7cc7"/></svg>
<div class="t " style="left:112px;top:956.5px;font-size:12.8px;line-height:16px;color:#222;">Brielle Cassidy</div>
<div class="clip" style="left:286px;top:949px;width:254px;height:28px;">
<div class="t " style="left:2px;top:7.5px;font-size:12.8px;line-height:16px;color:#222;">Brielle.Cassidy@M365x85832012.OnMicrosoft.com</div>
</div>
<div class="r" style="left:285px;top:949px;width:2px;height:28px;background:#1f5d86;"></div>
<div class="r" style="left:540px;top:949px;width:1px;height:28px;background:#2a7fb8;"></div>
<div class="r" style="left:605px;top:950px;width:24px;height:27px;background:#d4d4d4;"></div>
<div class="r" style="left:726px;top:950px;width:126px;height:27px;background:#d4d4d4;"></div>
<div class="t " style="left:544px;top:956.0px;font-size:13.3px;line-height:17px;color:#222;">Member</div>
<svg class="r" style="left:632px;top:955px;" width="16" height="16" viewBox="0 0 16 16"><circle cx="8" cy="8" r="7.5" fill="#1f9a67"/><path d="M4 8.2 L7 11 L12 5.2" fill="none" stroke="#fff" stroke-width="2"/></svg>
<div class="t " style="left:650px;top:956.5px;font-size:13px;line-height:16px;color:#222;">Allowed</div>
<div class="t " style="left:856px;top:956.5px;font-size:13px;line-height:16px;color:#222;">US</div>
<div class="t " style="left:912px;top:957.0px;font-size:11.7px;line-height:15px;color:#222;">MICROSOFT FLOW FREE</div>
<div class="t " style="left:1124px;top:956.5px;font-size:12.8px;line-height:16px;color:#222;width:60px;text-align:right;left:1064px;">33.75</div>
<div class="r" style="left:853px;top:949px;width:1px;height:28px;background:#f0f0f0;"></div>
<div class="r" style="left:909px;top:949px;width:1px;height:28px;background:#f0f0f0;"></div>
<div class="r" style="left:1061px;top:949px;width:1px;height:28px;background:#f0f0f0;"></div>
<div class="r" style="left:1125px;top:949px;width:1px;height:28px;background:#f0f0f0;"></div>
<div class="r" style="left:64px;top:977px;width:1px;height:28px;background:#ececec;"></div>
<div class="r" style="left:84px;top:977px;width:1px;height:28px;background:#ececec;"></div>
<div class="r" style="left:109px;top:977px;width:1px;height:28px;background:#ececec;"></div>
<div class="r" style="left:47px;top:1005px;width:1079px;height:1px;background:#efefef;"></div>
<svg class="r" style="left:67px;top:983px;" width="16" height="16" viewBox="0 0 16 16"><circle cx="8" cy="4.6" r="3.8" fill="#2b7cc7"/><path d="M1 15 C1.5 10.5 4.5 9.6 8 9.6 C11.5 9.6 14.5 10.5 15 15 Z" fill="#2b7cc7"/></svg>
<div class="t " style="left:112px;top:984.5px;font-size:12.8px;line-height:16px;color:#222;">Brielle Cromwel</div>
<div class="clip" style="left:286px;top:977px;width:254px;height:28px;">
<div class="t " style="left:2px;top:7.5px;font-size:12.8px;line-height:16px;color:#222;">Brielle.Cromwel@M365x85832012.OnMicrosoft.com</div>
</div>
<div class="r" style="left:285px;top:977px;width:2px;height:28px;background:#1f5d86;"></div>
<div class="r" style="left:540px;top:977px;width:1px;height:28px;background:#2a7fb8;"></div>
<div class="r" style="left:605px;top:978px;width:24px;height:27px;background:#d4d4d4;"></div>
<div class="r" style="left:726px;top:978px;width:126px;height:27px;background:#d4d4d4;"></div>
<div class="t " style="left:544px;top:984.0px;font-size:13.3px;line-height:17px;color:#222;">Member</div>
<svg class="r" style="left:632px;top:983px;" width="16" height="16" viewBox="0 0 16 16"><circle cx="8" cy="8" r="7.5" fill="#1f9a67"/><path d="M4 8.2 L7 11 L12 5.2" fill="none" stroke="#fff" stroke-width="2"/></svg>
<div class="t " style="left:650px;top:984.5px;font-size:13px;line-height:16px;color:#222;">Allowed</div>
<div class="t " style="left:856px;top:984.5px;font-size:13px;line-height:16px;color:#222;">US</div>
<div class="t " style="left:912px;top:985.0px;font-size:11.7px;line-height:15px;color:#222;">MICROSOFT FLOW FREE</div>
<div class="t " style="left:1124px;top:984.5px;font-size:12.8px;line-height:16px;color:#222;width:60px;text-align:right;left:1064px;">33.75</div>
<div class="r" style="left:853px;top:977px;width:1px;height:28px;background:#f0f0f0;"></div>
<div class="r" style="left:909px;top:977px;width:1px;height:28px;background:#f0f0f0;"></div>
<div class="r" style="left:1061px;top:977px;width:1px;height:28px;background:#f0f0f0;"></div>
<div class="r" style="left:1125px;top:977px;width:1px;height:28px;background:#f0f0f0;"></div>
<div class="r" style="left:64px;top:1005px;width:1px;height:28px;background:#ececec;"></div>
<div class="r" style="left:84px;top:1005px;width:1px;height:28px;background:#ececec;"></div>
<div class="r" style="left:109px;top:1005px;width:1px;height:28px;background:#ececec;"></div>
<div class="r" style="left:47px;top:1033px;width:1079px;height:1px;background:#efefef;"></div>
<svg class="r" style="left:67px;top:1011px;" width="16" height="16" viewBox="0 0 16 16"><circle cx="8" cy="4.6" r="3.8" fill="#2b7cc7"/><path d="M1 15 C1.5 10.5 4.5 9.6 8 9.6 C11.5 9.6 14.5 10.5 15 15 Z" fill="#2b7cc7"/></svg>
<div class="t " style="left:112px;top:1012.5px;font-size:12.8px;line-height:16px;color:#222;">Brielle May</div>
<div class="clip" style="left:286px;top:1005px;width:254px;height:28px;">
<div class="t " style="left:2px;top:7.5px;font-size:12.8px;line-height:16px;color:#222;">Brielle.May@M365x85832012.OnMicrosoft.com</div>
</div>
<div class="r" style="left:285px;top:1005px;width:2px;height:28px;background:#1f5d86;"></div>
<div class="r" style="left:540px;top:1005px;width:1px;height:28px;background:#2a7fb8;"></div>
<div class="r" style="left:605px;top:1006px;width:24px;height:27px;background:#d4d4d4;"></div>
<div class="r" style="left:726px;top:1006px;width:126px;height:27px;background:#d4d4d4;"></div>
<div class="t " style="left:544px;top:1012.0px;font-size:13.3px;line-height:17px;color:#222;">Member</div>
<svg class="r" style="left:632px;top:1011px;" width="16" height="16" viewBox="0 0 16 16"><circle cx="8" cy="8" r="7.5" fill="#d04b3c"/><rect x="3.5" y="6.8" width="9" height="2.6" fill="#fff"/></svg>
<div class="t " style="left:650px;top:1012.5px;font-size:13px;line-height:16px;color:#222;">Blocked</div>
<div class="t " style="left:856px;top:1012.5px;font-size:13px;line-height:16px;color:#222;">US</div>
<div class="t " style="left:912px;top:1013.0px;font-size:11.7px;line-height:15px;color:#222;">MICROSOFT FLOW FREE</div>
<div class="t " style="left:1124px;top:1012.5px;font-size:12.8px;line-height:16px;color:#222;width:60px;text-align:right;left:1064px;">33.75</div>
<div class="r" style="left:853px;top:1005px;width:1px;height:28px;background:#f0f0f0;"></div>
<div class="r" style="left:909px;top:1005px;width:1px;height:28px;background:#f0f0f0;"></div>
<div class="r" style="left:1061px;top:1005px;width:1px;height:28px;background:#f0f0f0;"></div>
<div class="r" style="left:1125px;top:1005px;width:1px;height:28px;background:#f0f0f0;"></div>
<div class="r" style="left:46px;top:621px;width:2px;height:28px;background:#2a6fc9;"></div>
<div class="r" style="left:47px;top:1036px;width:1803px;height:4px;background:#fff;"></div>
<div class="r" style="left:1850px;top:185px;width:17px;height:851px;background:#fafafa;"></div>
<svg class="r" style="left:1853px;top:188px;" width="10" height="8" viewBox="0 0 10 8"><path d="M0 6 L5 1 L10 6Z" fill="#444"/></svg>
<div class="r" style="left:1852px;top:321px;width:13px;height:43px;background:#8f8f8f;"></div>
<svg class="r" style="left:1853px;top:1024px;" width="10" height="8" viewBox="0 0 10 8"><path d="M0 1 L5 6 L10 1Z" fill="#444"/></svg>
<div class="r" style="left:0px;top:1037px;width:1920px;height:20px;background:linear-gradient(#fdfdfd,#f3f3f3);"></div>
<div class="t " style="left:7px;top:1039.3px;font-size:12.8px;line-height:16px;color:#222;">Rows Loaded: 533 | Rows Displayed: 533 | Rows Selected: 1</div>
<div class="r" style="left:0px;top:1057px;width:1918px;height:4px;background:#7b50c6;"></div>
<div class="r" style="left:116px;top:131px;width:313px;height:73px;background:rgba(0,0,0,0.28);filter:blur(2.5px);"></div>
<div class="r" style="left:112px;top:127px;width:313px;height:72px;background:#fff;border:1px solid #c6c6c6;box-sizing:border-box;"></div>
<div class="r" style="left:145px;top:174px;width:278px;height:1px;background:#e2e2e2;"></div>
<div class="r" style="left:115px;top:176px;width:308px;height:22px;background:#d8cdea;"></div>
<svg class="r" style="left:118px;top:130px;" width="20" height="20" viewBox="0 0 20 20"><rect x="1.5" y="1.5" width="15" height="17" fill="#fff" stroke="#555"/><rect x="1" y="1" width="16" height="3" fill="#2d63a8"/><path d="M6 4 V18" stroke="#555"/><circle cx="14" cy="15" r="4" fill="#fff" stroke="#555" stroke-width="1.1"/><path d="M12 17 L16 13" stroke="#555" stroke-width="1.1"/></svg>
<svg class="r" style="left:118px;top:153px;" width="20" height="20" viewBox="0 0 20 20"><rect x="1.5" y="1.5" width="16" height="17" fill="#fff" stroke="#777"/><rect x="1" y="1" width="10" height="3" fill="#2d63a8"/><rect x="11" y="1" width="7" height="3" fill="#a9bdd4"/><path d="M6 4 V18 M11.5 4 V18" stroke="#777"/></svg>
<svg class="r" style="left:118px;top:177px;" width="20" height="20" viewBox="0 0 20 20"><rect x="1.5" y="3.5" width="14" height="15" fill="#fff" stroke="#777"/><rect x="1" y="3" width="10" height="3" fill="#4a7bb8"/><path d="M7 6 V18" stroke="#777"/><path d="M14 0 L16 2" stroke="#777"/></svg>
<div class="t " style="left:147px;top:132.5px;font-size:11.8px;line-height:15px;color:#333;">Show/Hide columns...</div>
<div class="t " style="left:352px;top:132.5px;font-size:11.8px;line-height:15px;color:#333;">Ctrl+Alt+I</div>
<div class="t " style="left:147px;top:154.5px;font-size:11.8px;line-height:15px;color:#333;">Show Default columns (--Sandbox--)</div>
<div class="t " style="left:147px;top:179.5px;font-size:11.8px;line-height:15px;color:#333;">Select User columns to show in all sub-views...</div>
<div class="r" style="left:518px;top:269px;width:884px;height:538px;background:#fff;"></div>
<div class="r" style="left:518px;top:269px;width:884px;height:1px;background:#6b6b6b;"></div>
<div class="r" style="left:518px;top:269px;width:1px;height:538px;background:#555;"></div>
<svg class="r" style="left:526px;top:275px;" width="18" height="18" viewBox="0 0 18 18"><circle cx="9" cy="9" r="7.5" fill="#f5e2f8" stroke="#85589a" stroke-width="1.3"/><ellipse cx="6.8" cy="5.6" rx="1.7" ry="1" fill="#85589a"/><ellipse cx="11.2" cy="5.6" rx="1.7" ry="1" fill="#85589a"/><path d="M4.3 7.6 Q7 7 8.3 7.8 L6.6 13.6 Q4.3 11.2 4.3 7.6Z M13.7 7.6 Q11 7 9.7 7.8 L11.4 13.6 Q13.7 11.2 13.7 7.6Z" fill="#85589a"/><path d="M9 11.3 L10.4 14.2 L7.6 14.2Z" fill="#85589a"/></svg>
<div class="t " style="left:548px;top:278.0px;font-size:11.8px;line-height:15px;color:#222;">Select User columns to show in all sub-views...</div>
<svg class="r" style="left:1380px;top:278px;" width="12" height="12" viewBox="0 0 12 12"><path d="M1 1 L11 11 M11 1 L1 11" stroke="#111" stroke-width="1.3"/></svg>
<div class="t " style="left:540px;top:306.0px;font-size:11.9px;line-height:15px;color:#222;">Select the additional User columns you want to keep in your sub-views.</div>
<div class="t " style="left:540px;top:319.8px;font-size:11.65px;line-height:15px;color:#222;">[Included by default: User Display Name, GUID, Sync Enabled - On-Premises, Username]</div>
<div class="r" style="left:531px;top:349px;width:400px;height:405px;background:none;border:1px solid #d3d3d3;border-radius:5px;box-sizing:border-box;"></div>
<div class="r" style="left:537px;top:343px;width:102px;height:12px;background:#fff;"></div>
<div class="t " style="left:540px;top:342.3px;font-size:11.8px;line-height:15px;color:#222;">Available columns</div>
<div class="r" style="left:540px;top:358px;width:343px;height:21px;background:#fff;border:1px solid #adadad;box-sizing:border-box;"></div>
<div class="t " style="left:545px;top:361.0px;font-size:11.8px;line-height:15px;color:#222;">last</div>
<div class="r" style="left:892px;top:358px;width:27px;height:21px;background:#dcdcdc;border:1px solid #b5b5b5;box-sizing:border-box;"></div>
<svg class="r" style="left:897px;top:360px;" width="18" height="17" viewBox="0 0 18 17"><path d="M1 1 H13 L8.5 7 V15 L5.5 13 V7Z" fill="#555"/><path d="M11 1 L6 9" stroke="#fff" stroke-width="0.8"/><circle cx="12.5" cy="12" r="4.5" fill="#d8463a" stroke="#fff" stroke-width="0.8"/><path d="M10.5 10 L14.5 14 M14.5 10 L10.5 14" stroke="#fff" stroke-width="1.2"/></svg>
<div class="r" style="left:540px;top:388px;width:303px;height:22px;background:#0a74d8;"></div>
<div class="t " style="left:543px;top:391.0px;font-size:13.1px;line-height:16px;color:#fff;">Columns</div>
<svg class="r" style="left:820px;top:392px;" width="18" height="14" viewBox="0 0 18 14"><path d="M3 3 H15 L10.5 8 V12 L7.5 11 V8Z" fill="none" stroke="#fff" stroke-width="1.2"/><path d="M1 11 L6 6" stroke="#fff" stroke-width="1.2"/></svg>
<div class="r" style="left:843px;top:388px;width:61px;height:22px;background:#fff;border-top:1px solid #e0e0e0;box-sizing:border-box;"></div>
<div class="r" style="left:843px;top:409px;width:61px;height:1px;background:#d8d8d8;"></div>
<div class="r" style="left:862px;top:391px;width:1px;height:18px;background:#dadada;"></div>
<div class="r" style="left:882px;top:391px;width:1px;height:18px;background:#dadada;"></div>
<div class="r" style="left:902px;top:391px;width:1px;height:18px;background:#dadada;"></div>
<div class="t " style="left:846px;top:392.0px;font-size:12px;line-height:15px;color:#222;">I...</div>
<svg class="r" style="left:868px;top:395px;" width="10" height="6" viewBox="0 0 10 6"><path d="M0 6 L5 0 L10 6Z" fill="#b8b8b8"/></svg>
<div class="t " style="left:885px;top:392.0px;font-size:12px;line-height:15px;color:#222;">C..</div>
<div class="r" style="left:904px;top:388px;width:15px;height:353px;background:#f8f8f8;"></div>
<svg class="r" style="left:906px;top:393px;" width="11" height="7" viewBox="0 0 11 7"><path d="M0 6 L5.5 0 L11 6Z" fill="#404651"/></svg>
<div class="r" style="left:905px;top:405px;width:13px;height:291px;background:#8c8c8c;"></div>
<svg class="r" style="left:906px;top:727px;" width="11" height="7" viewBox="0 0 11 7"><path d="M0 0 L5.5 6 L11 0Z" fill="#404651"/></svg>
<div class="clip" style="left:540px;top:410px;width:364px;height:331px;">
<div class="r" style="left:0px;top:0px;width:364px;height:28px;background:#fcd7d6;"></div>
<div class="r" style="left:0px;top:27px;width:364px;height:1px;background:#fbe6e6;"></div>
<div class="r" style="left:322px;top:0px;width:1px;height:28px;background:#fbe9e9;"></div>
<div class="r" style="left:342px;top:0px;width:1px;height:28px;background:#fbe9e9;"></div>
<div class="clip" style="left:0;top:0px;width:300px;height:28px;">
<div class="t " style="left:2px;top:7.7px;font-size:13.1px;line-height:16px;color:#222;">User Info :: Password last changed on</div>
</div>
<div class="r" style="left:301px;top:0px;width:1px;height:28px;background:#3b78c2;"></div>
<svg class="r" style="left:306px;top:7px;" width="14" height="12" viewBox="0 0 14 12"><path d="M1.5 6 L5 9.5 L12.5 2" fill="none" stroke="#2a8c62" stroke-width="2.8"/></svg>
<div class="r" style="left:0px;top:28px;width:364px;height:28px;background:#fcd7d6;"></div>
<div class="r" style="left:0px;top:55px;width:364px;height:1px;background:#fbe6e6;"></div>
<div class="r" style="left:322px;top:28px;width:1px;height:28px;background:#fbe9e9;"></div>
<div class="r" style="left:342px;top:28px;width:1px;height:28px;background:#fbe9e9;"></div>
<div class="clip" style="left:0;top:28px;width:300px;height:28px;">
<div class="t " style="left:2px;top:7.7px;font-size:13.1px;line-height:16px;color:#222;">User Info :: Last updated - Assigned licenses</div>
</div>
<div class="r" style="left:301px;top:28px;width:1px;height:28px;background:#3b78c2;"></div>
<div class="r" style="left:0px;top:56px;width:364px;height:28px;background:#fcd7d6;"></div>
<div class="r" style="left:0px;top:83px;width:364px;height:1px;background:#fbe6e6;"></div>
<div class="r" style="left:322px;top:56px;width:1px;height:28px;background:#fbe9e9;"></div>
<div class="r" style="left:342px;top:56px;width:1px;height:28px;background:#fbe9e9;"></div>
<div class="clip" style="left:0;top:56px;width:300px;height:28px;">
<div class="t " style="left:2px;top:7.7px;font-size:13.1px;line-height:16px;color:#222;">User Info :: Last name</div>
</div>
<div class="r" style="left:301px;top:56px;width:1px;height:28px;background:#3b78c2;"></div>
<div class="r" style="left:0px;top:84px;width:364px;height:28px;background:#fcd7d6;"></div>
<div class="r" style="left:0px;top:111px;width:364px;height:1px;background:#fbe6e6;"></div>
<div class="r" style="left:322px;top:84px;width:1px;height:28px;background:#fbe9e9;"></div>
<div class="r" style="left:342px;top:84px;width:1px;height:28px;background:#fbe9e9;"></div>
<div class="clip" style="left:0;top:84px;width:300px;height:28px;">
<div class="t " style="left:2px;top:7.7px;font-size:13.1px;line-height:16px;color:#222;">On-Premises from AAD :: Last Sync - On-Premises</div>
</div>
<div class="r" style="left:301px;top:84px;width:1px;height:28px;background:#3b78c2;"></div>
<div class="r" style="left:0px;top:112px;width:364px;height:28px;background:#0a74d8;"></div>
<div class="r" style="left:322px;top:112px;width:1px;height:28px;background:#fff;"></div>
<div class="r" style="left:342px;top:112px;width:1px;height:28px;background:#fff;"></div>
<div class="r" style="left:301px;top:112px;width:1px;height:28px;background:#fff;"></div>
<div class="clip" style="left:0;top:112px;width:300px;height:28px;">
<div class="t " style="left:2px;top:7.7px;font-size:13.1px;line-height:16px;color:#fff;">User Info :: Last signed in on - Sign-in Activity</div>
</div>
<div class="r" style="left:301px;top:112px;width:1px;height:28px;background:#fff;"></div>
<svg class="r" style="left:323px;top:115px;" width="20" height="20" viewBox="0 0 20 20"><path d="M5.5 3 H10 V9 H12.5 L7 15.5 L1.5 9 H5.5Z" fill="#fff" stroke="#555" stroke-width="0.8"/><circle cx="13" cy="14" r="5" fill="#1f80d8" stroke="#fff" stroke-width="1.3"/><rect x="12.3" y="12.6" width="1.5" height="4.2" fill="#fff"/><rect x="12.3" y="10.4" width="1.5" height="1.4" fill="#fff"/></svg>
<div class="r" style="left:0px;top:140px;width:364px;height:28px;background:#fcd7d6;"></div>
<div class="r" style="left:0px;top:167px;width:364px;height:1px;background:#fbe6e6;"></div>
<div class="r" style="left:322px;top:140px;width:1px;height:28px;background:#fbe9e9;"></div>
<div class="r" style="left:342px;top:140px;width:1px;height:28px;background:#fbe9e9;"></div>
<div class="clip" style="left:0;top:140px;width:300px;height:28px;">
<div class="t " style="left:2px;top:7.7px;font-size:13.1px;line-height:16px;color:#222;">User Info :: Last sign-in request ID - Sign-in Activity</div>
</div>
<div class="r" style="left:301px;top:140px;width:1px;height:28px;background:#3b78c2;"></div>
<svg class="r" style="left:323px;top:143px;" width="20" height="20" viewBox="0 0 20 20"><path d="M5.5 3 H10 V9 H12.5 L7 15.5 L1.5 9 H5.5Z" fill="#5e5e5e" stroke="none" stroke-width="0.8"/><circle cx="13" cy="14" r="5" fill="#2f7fc6" stroke="#fff" stroke-width="1.3"/><rect x="12.3" y="12.6" width="1.5" height="4.2" fill="#fff"/><rect x="12.3" y="10.4" width="1.5" height="1.4" fill="#fff"/></svg>
<svg class="r" style="left:346px;top:146px;" width="15" height="15" viewBox="0 0 15 15"><path d="M2 13 L8.5 6.5" stroke="#626262" stroke-width="3" stroke-linecap="round"/><circle cx="10" cy="5" r="4.2" fill="#626262"/><circle cx="12" cy="3" r="2.2" fill="#fcd7d6"/></svg>
<div class="r" style="left:0px;top:168px;width:364px;height:28px;background:#fcd7d6;"></div>
<div class="r" style="left:0px;top:195px;width:364px;height:1px;background:#fbe6e6;"></div>
<div class="r" style="left:322px;top:168px;width:1px;height:28px;background:#fbe9e9;"></div>
<div class="r" style="left:342px;top:168px;width:1px;height:28px;background:#fbe9e9;"></div>
<div class="clip" style="left:0;top:168px;width:300px;height:28px;">
<div class="t " style="left:2px;top:7.7px;font-size:13.1px;line-height:16px;color:#222;">User Info :: Last non-interactively signed in on - Sign-in Activity</div>
</div>
<div class="r" style="left:301px;top:168px;width:1px;height:28px;background:#3b78c2;"></div>
<svg class="r" style="left:323px;top:171px;" width="20" height="20" viewBox="0 0 20 20"><path d="M5.5 3 H10 V9 H12.5 L7 15.5 L1.5 9 H5.5Z" fill="#5e5e5e" stroke="none" stroke-width="0.8"/><circle cx="13" cy="14" r="5" fill="#2f7fc6" stroke="#fff" stroke-width="1.3"/><rect x="12.3" y="12.6" width="1.5" height="4.2" fill="#fff"/><rect x="12.3" y="10.4" width="1.5" height="1.4" fill="#fff"/></svg>
<div class="r" style="left:0px;top:196px;width:364px;height:28px;background:#fcd7d6;"></div>
<div class="r" style="left:0px;top:223px;width:364px;height:1px;background:#fbe6e6;"></div>
<div class="r" style="left:322px;top:196px;width:1px;height:28px;background:#fbe9e9;"></div>
<div class="r" style="left:342px;top:196px;width:1px;height:28px;background:#fbe9e9;"></div>
<div class="clip" style="left:0;top:196px;width:300px;height:28px;">
<div class="t " style="left:2px;top:7.7px;font-size:13.1px;line-height:16px;color:#222;">User Info :: Last non-interactive sign-in request ID - Sign-in Activity</div>
</div>
<div class="r" style="left:301px;top:196px;width:1px;height:28px;background:#3b78c2;"></div>
<svg class="r" style="left:323px;top:199px;" width="20" height="20" viewBox="0 0 20 20"><path d="M5.5 3 H10 V9 H12.5 L7 15.5 L1.5 9 H5.5Z" fill="#5e5e5e" stroke="none" stroke-width="0.8"/><circle cx="13" cy="14" r="5" fill="#2f7fc6" stroke="#fff" stroke-width="1.3"/><rect x="12.3" y="12.6" width="1.5" height="4.2" fill="#fff"/><rect x="12.3" y="10.4" width="1.5" height="1.4" fill="#fff"/></svg>
<svg class="r" style="left:346px;top:202px;" width="15" height="15" viewBox="0 0 15 15"><path d="M2 13 L8.5 6.5" stroke="#626262" stroke-width="3" stroke-linecap="round"/><circle cx="10" cy="5" r="4.2" fill="#626262"/><circle cx="12" cy="3" r="2.2" fill="#fcd7d6"/></svg>
<div class="r" style="left:0px;top:224px;width:364px;height:28px;background:#fcd7d6;"></div>
<div class="r" style="left:0px;top:251px;width:364px;height:1px;background:#fbe6e6;"></div>
<div class="r" style="left:322px;top:224px;width:1px;height:28px;background:#fbe9e9;"></div>
<div class="r" style="left:342px;top:224px;width:1px;height:28px;background:#fbe9e9;"></div>
<div class="clip" style="left:0;top:224px;width:300px;height:28px;">
<div class="t " style="left:2px;top:7.7px;font-size:13.1px;line-height:16px;color:#222;">User Info :: Last updated on - User Registration Details</div>
</div>
<div class="r" style="left:301px;top:224px;width:1px;height:28px;background:#3b78c2;"></div>
<svg class="r" style="left:323px;top:227px;" width="20" height="20" viewBox="0 0 20 20"><path d="M5.5 3 H10 V9 H12.5 L7 15.5 L1.5 9 H5.5Z" fill="#5e5e5e" stroke="none" stroke-width="0.8"/><circle cx="13" cy="14" r="5" fill="#2f7fc6" stroke="#fff" stroke-width="1.3"/><rect x="12.3" y="12.6" width="1.5" height="4.2" fill="#fff"/><rect x="12.3" y="10.4" width="1.5" height="1.4" fill="#fff"/></svg>
<div class="r" style="left:0px;top:252px;width:364px;height:28px;background:#fcd7d6;"></div>
<div class="r" style="left:0px;top:279px;width:364px;height:1px;background:#fbe6e6;"></div>
<div class="r" style="left:322px;top:252px;width:1px;height:28px;background:#fbe9e9;"></div>
<div class="r" style="left:342px;top:252px;width:1px;height:28px;background:#fbe9e9;"></div>
<div class="clip" style="left:0;top:252px;width:300px;height:28px;">
<div class="t " style="left:2px;top:7.7px;font-size:13.1px;line-height:16px;color:#222;">OneDrive Info :: Last Modified Date Time</div>
</div>
<div class="r" style="left:301px;top:252px;width:1px;height:28px;background:#3b78c2;"></div>
<svg class="r" style="left:323px;top:255px;" width="20" height="20" viewBox="0 0 20 20"><path d="M5.5 3 H10 V9 H12.5 L7 15.5 L1.5 9 H5.5Z" fill="#5e5e5e" stroke="none" stroke-width="0.8"/><circle cx="13" cy="14" r="5" fill="#2f7fc6" stroke="#fff" stroke-width="1.3"/><rect x="12.3" y="12.6" width="1.5" height="4.2" fill="#fff"/><rect x="12.3" y="10.4" width="1.5" height="1.4" fill="#fff"/></svg>
<div class="r" style="left:0px;top:280px;width:364px;height:28px;background:#fcd7d6;"></div>
<div class="r" style="left:0px;top:307px;width:364px;height:1px;background:#fbe6e6;"></div>
<div class="r" style="left:322px;top:280px;width:1px;height:28px;background:#fbe9e9;"></div>
<div class="r" style="left:342px;top:280px;width:1px;height:28px;background:#fbe9e9;"></div>
<div class="clip" style="left:0;top:280px;width:300px;height:28px;">
<div class="t " style="left:2px;top:7.7px;font-size:13.1px;line-height:16px;color:#222;">OneDrive Info :: Last Modified By Type</div>
</div>
<div class="r" style="left:301px;top:280px;width:1px;height:28px;background:#3b78c2;"></div>
<svg class="r" style="left:323px;top:283px;" width="20" height="20" viewBox="0 0 20 20"><path d="M5.5 3 H10 V9 H12.5 L7 15.5 L1.5 9 H5.5Z" fill="#5e5e5e" stroke="none" stroke-width="0.8"/><circle cx="13" cy="14" r="5" fill="#2f7fc6" stroke="#fff" stroke-width="1.3"/><rect x="12.3" y="12.6" width="1.5" height="4.2" fill="#fff"/><rect x="12.3" y="10.4" width="1.5" height="1.4" fill="#fff"/></svg>
<div class="r" style="left:0px;top:308px;width:364px;height:28px;background:#fcd7d6;"></div>
<div class="r" style="left:0px;top:335px;width:364px;height:1px;background:#fbe6e6;"></div>
<div class="r" style="left:322px;top:308px;width:1px;height:28px;background:#fbe9e9;"></div>
<div class="r" style="left:342px;top:308px;width:1px;height:28px;background:#fbe9e9;"></div>
<div class="clip" style="left:0;top:308px;width:300px;height:28px;">
<div class="t " style="left:2px;top:7.7px;font-size:13.1px;line-height:16px;color:#222;">OneDrive Info :: Last Modified By Name</div>
</div>
<div class="r" style="left:301px;top:308px;width:1px;height:28px;background:#3b78c2;"></div>
<svg class="r" style="left:323px;top:311px;" width="20" height="20" viewBox="0 0 20 20"><path d="M5.5 3 H10 V9 H12.5 L7 15.5 L1.5 9 H5.5Z" fill="#5e5e5e" stroke="none" stroke-width="0.8"/><circle cx="13" cy="14" r="5" fill="#2f7fc6" stroke="#fff" stroke-width="1.3"/><rect x="12.3" y="12.6" width="1.5" height="4.2" fill="#fff"/><rect x="12.3" y="10.4" width="1.5" height="1.4" fill="#fff"/></svg>
</div>
<svg class="r" style="left:948px;top:527px;" width="22" height="17" viewBox="0 0 22 17"><path d="M2 8.5 H16 M10.5 2.5 L17 8.5 L10.5 14.5" fill="none" stroke="#2d6bb0" stroke-width="4"/></svg>
<svg class="r" style="left:948px;top:553px;" width="22" height="17" viewBox="0 0 22 17"><path d="M20 8.5 H6 M11.5 2.5 L5 8.5 L11.5 14.5" fill="none" stroke="#2d6bb0" stroke-width="4"/></svg>
<div class="r" style="left:987px;top:349px;width:399px;height:405px;background:none;border:1px solid #d3d3d3;border-radius:5px;box-sizing:border-box;"></div>
<div class="r" style="left:993px;top:343px;width:100px;height:12px;background:#fff;"></div>
<div class="t " style="left:996px;top:342.3px;font-size:11.8px;line-height:15px;color:#222;">Selected columns</div>
<div class="r" style="left:993px;top:358px;width:378px;height:21px;background:#fff;"></div>
<div class="r" style="left:1032px;top:358px;width:339px;height:21px;background:#0a74d8;"></div>
<div class="r" style="left:993px;top:378px;width:378px;height:1px;background:#d0d0d0;"></div>
<div class="r" style="left:1012px;top:360px;width:1px;height:18px;background:#d8d8d8;"></div>
<div class="t " style="left:996px;top:361.5px;font-size:12px;line-height:15px;color:#222;">M.</div>
<div class="t " style="left:1015px;top:361.5px;font-size:12px;line-height:15px;color:#222;">M.</div>
<div class="t " style="left:1035px;top:360.5px;font-size:13.1px;line-height:16px;color:#fff;">Selected Columns</div>
<div class="r" style="left:993px;top:379px;width:378px;height:28px;background:#0a74d8;"></div>
<div class="r" style="left:1012px;top:379px;width:1px;height:28px;background:#fff;"></div>
<div class="r" style="left:1032px;top:379px;width:1px;height:28px;background:#fff;"></div>
<svg class="r" style="left:996px;top:386px;" width="12" height="14" viewBox="0 0 12 14"><path d="M6 1 L11 7 H8 V13 H4 V7 H1Z" fill="#fff"/></svg>
<svg class="r" style="left:1016px;top:386px;" width="12" height="14" viewBox="0 0 12 14"><path d="M6 13 L10 8 H7.5 V1 H4.5 V8 H2Z" fill="#fff"/></svg>
<div class="t " style="left:1035px;top:386.0px;font-size:13.1px;line-height:16px;color:#fff;">User Info :: Department</div>
<div class="r" style="left:993px;top:407px;width:378px;height:29px;background:#fff;"></div>
<div class="r" style="left:993px;top:435px;width:378px;height:1px;background:#eaeaea;"></div>
<div class="r" style="left:1012px;top:407px;width:1px;height:29px;background:#eaeaea;"></div>
<div class="r" style="left:1032px;top:407px;width:1px;height:29px;background:#3b78c2;"></div>
<div class="r" style="left:1370px;top:379px;width:1px;height:57px;background:#3b78c2;"></div>
<svg class="r" style="left:996px;top:414px;" width="12" height="14" viewBox="0 0 12 14"><path d="M6 1 L11 7 H8 V13 H4 V7 H1Z" fill="#fff" stroke="#4a8fd0" stroke-width="1.1"/></svg>
<svg class="r" style="left:1016px;top:414px;" width="12" height="14" viewBox="0 0 12 14"><path d="M6 13 L11 7 H8 V1 H4 V7 H1Z" fill="#fff" stroke="#a8a8a8" stroke-width="1.1"/></svg>
<div class="t " style="left:1035px;top:414.0px;font-size:13.1px;line-height:16px;color:#222;">User Info :: Last signed in on - Sign-in Activity</div>
<svg class="r" style="left:540px;top:774px;" width="14" height="14" viewBox="0 0 14 14"><rect x="0.5" y="0.5" width="13" height="13" fill="#fff" stroke="#8f8f8f"/><path d="M3 7 L6 10.5 L11 3" fill="none" stroke="#777" stroke-width="1.6"/></svg>
<div class="t " style="left:558px;top:774.0px;font-size:12.1px;line-height:15px;color:#222;">Don't ask again - Turn off automatic display of this dialog</div>
<div class="r" style="left:1230px;top:771px;width:73px;height:21px;background:#e1e1e1;border:2px solid #0a6bd0;box-sizing:border-box;"></div>
<div class="t " style="left:1266.5px;top:774.5px;font-size:12.2px;line-height:15px;color:#222;width:73px;text-align:center;left:1230.0px;">OK</div>
<div class="r" style="left:1311px;top:771px;width:73px;height:21px;background:#e1e1e1;border:1px solid #adadad;box-sizing:border-box;"></div>
<div class="t " style="left:1347.5px;top:774.5px;font-size:12.2px;line-height:15px;color:#222;width:73px;text-align:center;left:1311.0px;">Cancel</div>
<div class="r" style="left:1398px;top:796px;width:2px;height:2px;background:#a8a8a8;"></div>
<div class="r" style="left:1394px;top:800px;width:2px;height:2px;background:#a8a8a8;"></div>
<div class="r" style="left:1398px;top:800px;width:2px;height:2px;background:#a8a8a8;"></div>
<div class="r" style="left:1390px;top:804px;width:2px;height:2px;background:#a8a8a8;"></div>
<div class="r" style="left:1394px;top:804px;width:2px;height:2px;background:#a8a8a8;"></div>
<div class="r" style="left:1398px;top:804px;width:2px;height:2px;background:#a8a8a8;"></div>
<svg class="r" style="left:260px;top:200px;overflow:visible;" width="270" height="120" viewBox="0 0 270 120"><g transform="translate(1,3)" style="filter:blur(2px)" opacity="0.35"><path d="M8 10 L237 104" stroke="#000" stroke-width="4.6" stroke-linecap="round"/><path d="M251 110 L238.5 95.5 L232 112Z" fill="#000"/></g><path d="M8 10 L237 104" stroke="#ee22a0" stroke-width="4.6" stroke-linecap="round"/><path d="M251 110 L238.5 95.5 L232 112Z" fill="#ee22a0"/></svg>
<div class="r" style="left:85px;top:165px;width:40px;height:40px;background:rgba(0,0,0,0.40);border-radius:50%;filter:blur(3.5px);"></div>
<div class="r" style="left:84px;top:160px;width:40px;height:40px;background:#ee1f9c;border-radius:50%;"></div>
<svg class="r" style="left:84px;top:160px;" width="40" height="40" viewBox="0 0 40 40"><path d="M15.5 16 L21.2 11 H24 V32 H20.6 V15.8 L17.3 18.8Z" fill="#fff"/></svg>
<div class="r" style="left:576px;top:349px;width:40px;height:40px;background:rgba(0,0,0,0.40);border-radius:50%;filter:blur(3.5px);"></div>
<div class="r" style="left:575px;top:344px;width:40px;height:40px;background:#ee1f9c;border-radius:50%;"></div>
<div class="t " style="left:595px;top:347.0px;font-size:28px;line-height:35px;color:#fff;width:40px;text-align:center;left:575.0px;">2</div>
<div class="r" style="left:941px;top:480px;width:40px;height:40px;background:rgba(0,0,0,0.40);border-radius:50%;filter:blur(3.5px);"></div>
<div class="r" style="left:940px;top:475px;width:40px;height:40px;background:#ee1f9c;border-radius:50%;"></div>
<div class="t " style="left:960px;top:478.0px;font-size:28px;line-height:35px;color:#fff;width:40px;text-align:center;left:940.0px;">3</div>
<div class="r" style="left:941px;top:581px;width:40px;height:40px;background:rgba(0,0,0,0.40);border-radius:50%;filter:blur(3.5px);"></div>
<div class="r" style="left:940px;top:576px;width:40px;height:40px;background:#ee1f9c;border-radius:50%;"></div>
<div class="t " style="left:960px;top:579.0px;font-size:28px;line-height:35px;color:#fff;width:40px;text-align:center;left:940.0px;">4</div>
</body></html>
